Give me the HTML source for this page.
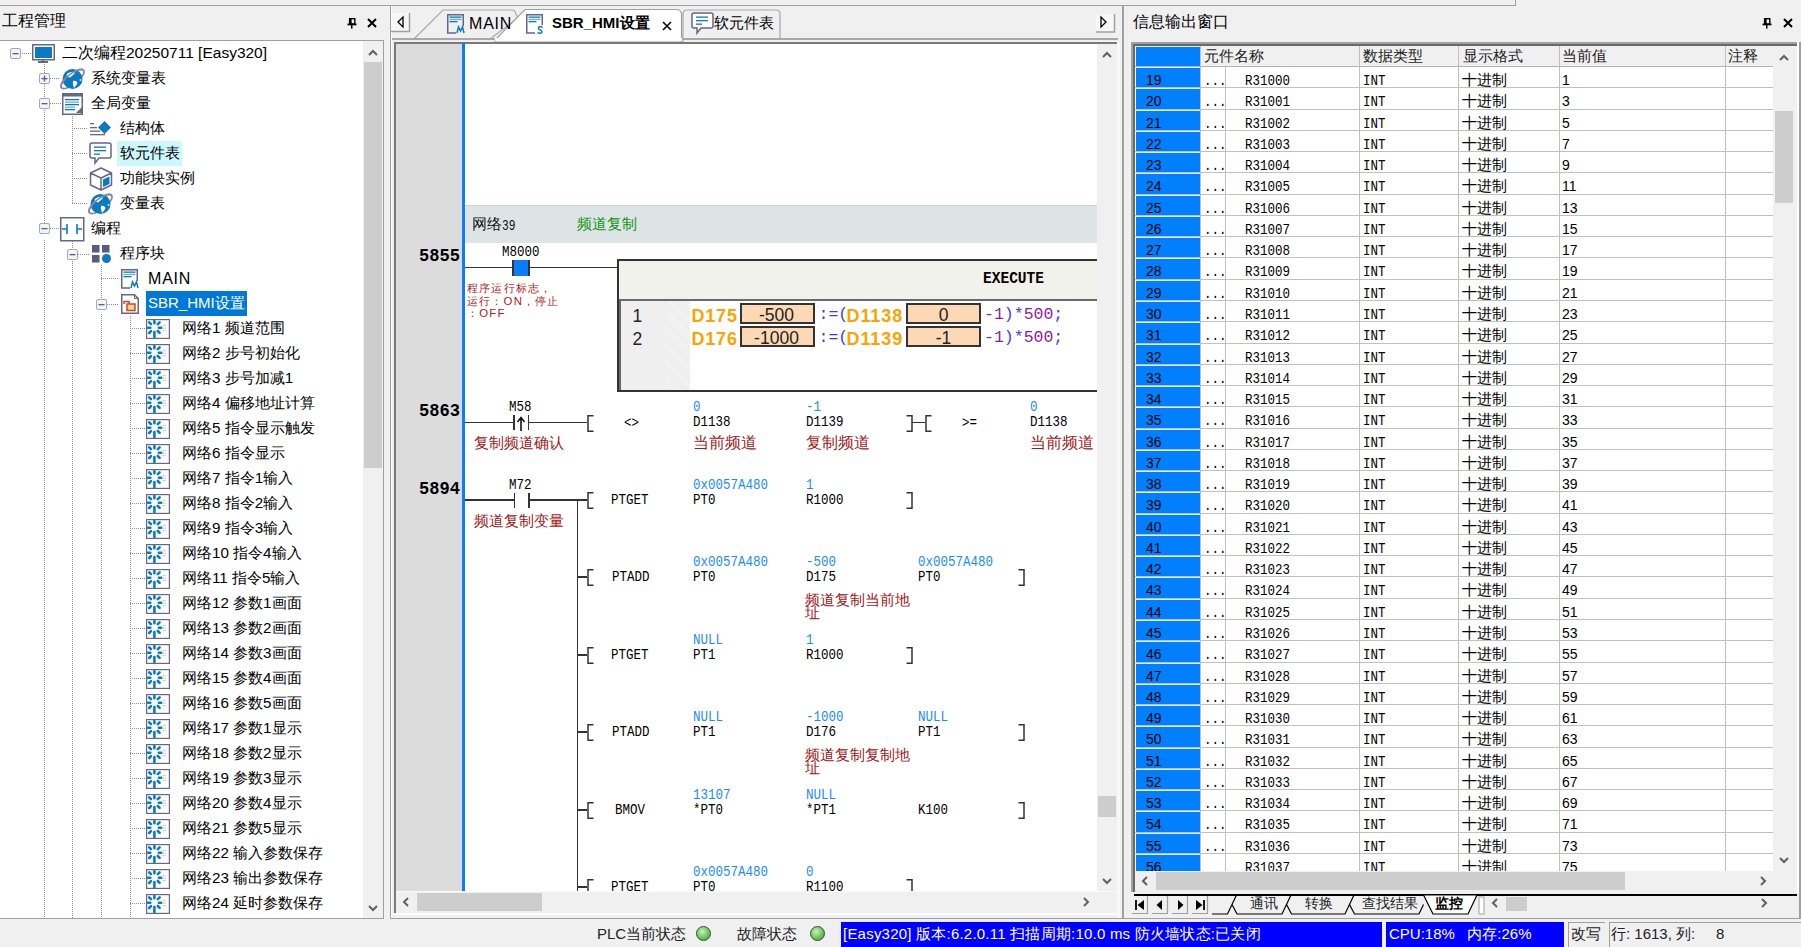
<!DOCTYPE html><html><head><meta charset="utf-8"><style>
*{margin:0;padding:0;box-sizing:border-box}
body{width:1801px;height:947px;background:#f0f0f0;position:relative;overflow:hidden;font-family:"Liberation Sans",sans-serif;color:#000}
.t{position:absolute;white-space:nowrap;line-height:1}
.ui{font-size:15px}
.mono{font-family:"Liberation Mono",monospace}
svg{position:absolute;overflow:visible}
</style></head><body>
<div style="position:absolute;left:0px;top:5px;width:1515px;height:1px;background:#a0a0a0"></div>
<div style="position:absolute;left:1515px;top:0px;width:1px;height:6px;background:#a0a0a0"></div>
<div class="t" style="left:2px;top:13px;font-size:15.5px">工程管理</div>
<svg style="left:346.5px;top:18px" width="10" height="11" viewBox="0 0 10 11"><rect x="2.6" y="0.7" width="5.2" height="5.3" fill="none" stroke="#000" stroke-width="1.4"/><rect x="2" y="0" width="2.6" height="6" fill="#000"/><rect x="0.5" y="5.6" width="9" height="1.7" fill="#000"/><rect x="4" y="7" width="1.5" height="3.6" fill="#000"/></svg>
<svg style="left:367px;top:18px" width="10" height="10" viewBox="0 0 10 10"><path d="M1 1L9 9M9 1L1 9" stroke="#000" stroke-width="2"/></svg>
<div style="position:absolute;left:0px;top:40px;width:384px;height:1px;background:#a0a0a0"></div>
<div style="position:absolute;left:0px;top:41px;width:363px;height:877px;background:#fff"></div>
<div style="position:absolute;left:363px;top:41px;width:20px;height:877px;background:#f0f0f0"></div>
<div style="position:absolute;left:383px;top:40px;width:1px;height:879px;background:#a0a0a0"></div>
<div style="position:absolute;left:0px;top:918px;width:384px;height:1px;background:#a0a0a0"></div>
<div style="position:absolute;left:364px;top:62px;width:18px;height:406px;background:#cdcdcd"></div>
<svg style="left:368px;top:49px" width="10" height="7" viewBox="0 0 10 7"><path d="M1 6L5 2L9 6" fill="none" stroke="#606060" stroke-width="2"/></svg>
<svg style="left:368px;top:905px" width="10" height="7" viewBox="0 0 10 7"><path d="M1 1L5 5L9 1" fill="none" stroke="#606060" stroke-width="2"/></svg>
<div style="position:absolute;left:44px;top:64px;width:1px;height:166px;background:repeating-linear-gradient(#909090 0 1px,transparent 1px 2px)"></div>
<div style="position:absolute;left:44px;top:240px;width:1px;height:678px;background:repeating-linear-gradient(#909090 0 1px,transparent 1px 2px)"></div>
<div style="position:absolute;left:72px;top:116px;width:1px;height:88px;background:repeating-linear-gradient(#909090 0 1px,transparent 1px 2px)"></div>
<div style="position:absolute;left:72px;top:241px;width:1px;height:677px;background:repeating-linear-gradient(#909090 0 1px,transparent 1px 2px)"></div>
<div style="position:absolute;left:101px;top:265px;width:1px;height:37px;background:repeating-linear-gradient(#909090 0 1px,transparent 1px 2px)"></div>
<div style="position:absolute;left:101px;top:314px;width:1px;height:604px;background:repeating-linear-gradient(#909090 0 1px,transparent 1px 2px)"></div>
<div style="position:absolute;left:130px;top:316px;width:1px;height:602px;background:repeating-linear-gradient(#909090 0 1px,transparent 1px 2px)"></div>
<svg style="left:10px;top:48px" width="11" height="11" viewBox="0 0 11 11"><rect x="0.5" y="0.5" width="10" height="10" rx="1.5" fill="#f4f4f4" stroke="#a8a8a8"/><rect x="2.5" y="5" width="6" height="1.3" fill="#5060a8"/></svg>
<div style="position:absolute;left:22px;top:53px;width:9px;height:1px;background:repeating-linear-gradient(90deg,#909090 0 1px,transparent 1px 2px)"></div>
<svg style="left:32px;top:44px" width="23" height="20" viewBox="0 0 23 20"><rect x="0.75" y="0.75" width="21.5" height="15" fill="#fff" stroke="#66668a" stroke-width="1.5"/><rect x="3" y="3" width="17" height="11" fill="#0a7ac2"/><rect x="6" y="17" width="10" height="2" fill="#66668a"/><rect x="10" y="15" width="2" height="2" fill="#66668a"/></svg>
<div class="t" style="left:62px;top:45px;font-size:15.5px">二次编程20250711 [Easy320]</div>
<svg style="left:39px;top:73px" width="11" height="11" viewBox="0 0 11 11"><rect x="0.5" y="0.5" width="10" height="10" rx="1.5" fill="#f4f4f4" stroke="#a8a8a8"/><rect x="2.5" y="5" width="6" height="1.3" fill="#5060a8"/><rect x="4.85" y="2.5" width="1.3" height="6" fill="#5060a8"/></svg>
<div style="position:absolute;left:50px;top:78px;width:10px;height:1px;background:repeating-linear-gradient(90deg,#909090 0 1px,transparent 1px 2px)"></div>
<svg style="left:60px;top:67px" width="26" height="24" viewBox="0 0 26 24"><g transform="rotate(-38 12.5 12)"><ellipse cx="12.5" cy="12" rx="14" ry="5.2" fill="none" stroke="#8a8a9e" stroke-width="1.8"/></g><circle cx="12.5" cy="12" r="10" fill="#0a7ac2"/><path d="M6.5 8C8 5 12 4.5 15 5.5C14.5 7.5 12 8.5 10 10.5C8.5 10.5 7 9.5 6.5 8Z M13 14C15 13.5 17 14.5 17.5 16C16.5 18 15.5 19.5 14 21C13.5 19 12.5 16.5 13 14Z" fill="#fff"/><circle cx="20.5" cy="13" r="1" fill="#cde6f5"/><g transform="rotate(-38 12.5 12)"><path d="M-1.5 12A14 5.2 0 0 1 26.5 12" fill="none" stroke="#8a8a9e" stroke-width="1.8"/></g></svg>
<div class="t" style="left:91px;top:70px;font-size:15px">系统变量表</div>
<svg style="left:39px;top:98px" width="11" height="11" viewBox="0 0 11 11"><rect x="0.5" y="0.5" width="10" height="10" rx="1.5" fill="#f4f4f4" stroke="#a8a8a8"/><rect x="2.5" y="5" width="6" height="1.3" fill="#5060a8"/></svg>
<div style="position:absolute;left:50px;top:103px;width:11px;height:1px;background:repeating-linear-gradient(90deg,#909090 0 1px,transparent 1px 2px)"></div>
<svg style="left:62px;top:93px" width="21" height="22" viewBox="0 0 21 22"><rect x="0.75" y="0.75" width="19.5" height="20.5" fill="#fff" stroke="#66668a" stroke-width="1.5"/><rect x="1" y="1" width="19" height="2.5" fill="#66668a"/><rect x="3" y="6" width="14" height="1.3" fill="#0a7ac2"/><rect x="3" y="8.5" width="14" height="1.3" fill="#69b0dd"/><rect x="3" y="11" width="14" height="1.3" fill="#0a7ac2"/><rect x="3" y="13.5" width="10" height="1.3" fill="#69b0dd"/><rect x="3" y="16" width="10" height="1.3" fill="#0a7ac2"/><path d="M14 20L20 14V20Z" fill="#66668a"/></svg>
<div class="t" style="left:91px;top:95px;font-size:15px">全局变量</div>
<div style="position:absolute;left:72px;top:128px;width:16px;height:1px;background:repeating-linear-gradient(90deg,#909090 0 1px,transparent 1px 2px)"></div>
<svg style="left:89px;top:120px" width="23" height="16" viewBox="0 0 23 16"><rect x="1" y="3" width="4" height="1.3" fill="#66668a"/><rect x="1" y="7" width="7" height="1.3" fill="#66668a"/><rect x="1" y="10.5" width="10" height="1.3" fill="#66668a"/><rect x="1" y="14" width="15" height="1.3" fill="#66668a"/><path d="M15.5 1L22 7.5L15.5 14L9 7.5Z" fill="#0a7ac2"/></svg>
<div class="t" style="left:120px;top:120px;font-size:15px">结构体</div>
<div style="position:absolute;left:72px;top:153px;width:16px;height:1px;background:repeating-linear-gradient(90deg,#909090 0 1px,transparent 1px 2px)"></div>
<div style="position:absolute;left:117px;top:141px;width:65px;height:25px;background:#cdf7fc"></div>
<svg style="left:89px;top:142px" width="23" height="23" viewBox="0 0 23 23"><path d="M3 1H20a2 2 0 0 1 2 2V14a2 2 0 0 1-2 2H10L6 21V16H3a2 2 0 0 1-2-2V3a2 2 0 0 1 2-2Z" fill="#fff" stroke="#66668a" stroke-width="1.5"/><rect x="5" y="4.5" width="12" height="1.3" fill="#0a7ac2"/><rect x="5" y="8" width="12" height="1.3" fill="#0a7ac2"/><rect x="5" y="11.5" width="6" height="1.3" fill="#0a7ac2"/></svg>
<div class="t" style="left:120px;top:145px;font-size:15px">软元件表</div>
<div style="position:absolute;left:72px;top:178px;width:16px;height:1px;background:repeating-linear-gradient(90deg,#909090 0 1px,transparent 1px 2px)"></div>
<svg style="left:89px;top:167px" width="24" height="24" viewBox="0 0 24 24"><path d="M12 1L22.5 6V18L12 23L1.5 18V6Z M1.5 6L12 11L22.5 6 M12 11V23" fill="#fff" stroke="#66668a" stroke-width="1.5" stroke-linejoin="round"/><path d="M14 12.5L20.5 9.5V17L14 20Z" fill="#0a7ac2"/></svg>
<div class="t" style="left:120px;top:170px;font-size:15px">功能块实例</div>
<div style="position:absolute;left:72px;top:203px;width:16px;height:1px;background:repeating-linear-gradient(90deg,#909090 0 1px,transparent 1px 2px)"></div>
<svg style="left:88px;top:192px" width="26" height="24" viewBox="0 0 26 24"><g transform="rotate(-38 12.5 12)"><ellipse cx="12.5" cy="12" rx="14" ry="5.2" fill="none" stroke="#8a8a9e" stroke-width="1.8"/></g><circle cx="12.5" cy="12" r="10" fill="#0a7ac2"/><path d="M6.5 8C8 5 12 4.5 15 5.5C14.5 7.5 12 8.5 10 10.5C8.5 10.5 7 9.5 6.5 8Z M13 14C15 13.5 17 14.5 17.5 16C16.5 18 15.5 19.5 14 21C13.5 19 12.5 16.5 13 14Z" fill="#fff"/><circle cx="20.5" cy="13" r="1" fill="#cde6f5"/><g transform="rotate(-38 12.5 12)"><path d="M-1.5 12A14 5.2 0 0 1 26.5 12" fill="none" stroke="#8a8a9e" stroke-width="1.8"/></g></svg>
<div class="t" style="left:120px;top:195px;font-size:15px">变量表</div>
<svg style="left:39px;top:223px" width="11" height="11" viewBox="0 0 11 11"><rect x="0.5" y="0.5" width="10" height="10" rx="1.5" fill="#f4f4f4" stroke="#a8a8a8"/><rect x="2.5" y="5" width="6" height="1.3" fill="#5060a8"/></svg>
<div style="position:absolute;left:50px;top:228px;width:9px;height:1px;background:repeating-linear-gradient(90deg,#909090 0 1px,transparent 1px 2px)"></div>
<svg style="left:60px;top:217px" width="25" height="24" viewBox="0 0 25 24"><rect x="0.75" y="0.75" width="23" height="23" fill="#fff" stroke="#66668a" stroke-width="1.5"/><path d="M2 12H7M7 7V17M17 7V17M17 12H22" stroke="#0a7ac2" stroke-width="1.6" fill="none"/></svg>
<div class="t" style="left:91px;top:220px;font-size:15px">编程</div>
<svg style="left:67px;top:249px" width="11" height="11" viewBox="0 0 11 11"><rect x="0.5" y="0.5" width="10" height="10" rx="1.5" fill="#f4f4f4" stroke="#a8a8a8"/><rect x="2.5" y="5" width="6" height="1.3" fill="#5060a8"/></svg>
<div style="position:absolute;left:78px;top:254px;width:12px;height:1px;background:repeating-linear-gradient(90deg,#909090 0 1px,transparent 1px 2px)"></div>
<svg style="left:92px;top:245px" width="19" height="18" viewBox="0 0 19 18"><rect x="0" y="0" width="7.5" height="7.5" fill="#5b5b7e"/><rect x="10" y="0" width="7.5" height="7.5" fill="#5b5b7e"/><rect x="0" y="10" width="7.5" height="7.5" fill="#5b5b7e"/><circle cx="14.5" cy="13.5" r="4.5" fill="#0a7ac2"/></svg>
<div class="t" style="left:120px;top:245px;font-size:15px">程序块</div>
<div style="position:absolute;left:101px;top:278px;width:18px;height:1px;background:repeating-linear-gradient(90deg,#909090 0 1px,transparent 1px 2px)"></div>
<svg style="left:121px;top:269px" width="18" height="20" viewBox="0 0 18 20"><path d="M9 19H0.75V0.75H16.25V12" fill="none" stroke="#66668a" stroke-width="1.5"/><rect x="2.5" y="2.5" width="12" height="1.3" fill="#0a7ac2"/><rect x="2.5" y="4.8" width="12" height="1.3" fill="#69b0dd"/><rect x="2.5" y="7" width="8" height="1.3" fill="#0a7ac2"/><path d="M10 19L11.5 13L13.5 17L15.5 13L17 19" fill="none" stroke="#0a7ac2" stroke-width="1.5"/></svg>
<div class="t" style="left:148px;top:271px;font-size:16px;letter-spacing:0.8px">MAIN</div>
<svg style="left:96px;top:299px" width="11" height="11" viewBox="0 0 11 11"><rect x="0.5" y="0.5" width="10" height="10" rx="1.5" fill="#f4f4f4" stroke="#a8a8a8"/><rect x="2.5" y="5" width="6" height="1.3" fill="#5060a8"/></svg>
<div style="position:absolute;left:107px;top:304px;width:12px;height:1px;background:repeating-linear-gradient(90deg,#909090 0 1px,transparent 1px 2px)"></div>
<svg style="left:121px;top:294px" width="18" height="20" viewBox="0 0 18 20"><path d="M0.75 0.75H13.5L17.25 4.5V19.25H0.75Z" fill="#fff" stroke="#66668a" stroke-width="1.5"/><path d="M13.5 1V4.5H17" fill="none" stroke="#66668a" stroke-width="1"/><rect x="6" y="10" width="8" height="6.5" fill="#e8e080" stroke="#e03c3c" stroke-width="1.5"/><path d="M3 10V7.5H8V10" fill="none" stroke="#e03c3c" stroke-width="1.5"/></svg>
<div style="position:absolute;left:146px;top:291px;width:101px;height:25px;background:#0078d7"></div>
<div class="t" style="left:148px;top:295px;font-size:15px;color:#fff">SBR_HMI设置</div>
<div style="position:absolute;left:130px;top:328px;width:15px;height:1px;background:repeating-linear-gradient(90deg,#909090 0 1px,transparent 1px 2px)"></div>
<svg style="left:146px;top:318.5px" width="24" height="20" viewBox="0 0 24 20"><rect x="0.6" y="0.6" width="22.8" height="18.8" fill="#fff" stroke="#66668a" stroke-width="1.2"/><g stroke="#0a7ac2" stroke-width="2.6" stroke-linecap="round"><path d="M8.4 2V4.2M8.4 13V18.2M2 8.7H4.3M12.9 8.7H15.2M3.2 3.3L5 5.1M11.8 12L13.6 13.8M3.2 14L5 12.2M11.8 5.2L13.6 3.4"/></g><g fill="#a0a0a0"><rect x="16.8" y="6.2" width="1" height="1"/><rect x="18.6" y="6.2" width="1" height="1"/><rect x="16.8" y="8.7" width="1" height="1"/><rect x="18.6" y="8.7" width="1" height="1"/><rect x="16.8" y="11.2" width="1" height="1"/><rect x="18.6" y="11.2" width="1" height="1"/></g></svg>
<div class="t" style="left:182px;top:320px;font-size:15.2px">网络1 频道范围</div>
<div style="position:absolute;left:130px;top:353px;width:15px;height:1px;background:repeating-linear-gradient(90deg,#909090 0 1px,transparent 1px 2px)"></div>
<svg style="left:146px;top:343.5px" width="24" height="20" viewBox="0 0 24 20"><rect x="0.6" y="0.6" width="22.8" height="18.8" fill="#fff" stroke="#66668a" stroke-width="1.2"/><g stroke="#0a7ac2" stroke-width="2.6" stroke-linecap="round"><path d="M8.4 2V4.2M8.4 13V18.2M2 8.7H4.3M12.9 8.7H15.2M3.2 3.3L5 5.1M11.8 12L13.6 13.8M3.2 14L5 12.2M11.8 5.2L13.6 3.4"/></g><g fill="#a0a0a0"><rect x="16.8" y="6.2" width="1" height="1"/><rect x="18.6" y="6.2" width="1" height="1"/><rect x="16.8" y="8.7" width="1" height="1"/><rect x="18.6" y="8.7" width="1" height="1"/><rect x="16.8" y="11.2" width="1" height="1"/><rect x="18.6" y="11.2" width="1" height="1"/></g></svg>
<div class="t" style="left:182px;top:345px;font-size:15.2px">网络2 步号初始化</div>
<div style="position:absolute;left:130px;top:378px;width:15px;height:1px;background:repeating-linear-gradient(90deg,#909090 0 1px,transparent 1px 2px)"></div>
<svg style="left:146px;top:368.5px" width="24" height="20" viewBox="0 0 24 20"><rect x="0.6" y="0.6" width="22.8" height="18.8" fill="#fff" stroke="#66668a" stroke-width="1.2"/><g stroke="#0a7ac2" stroke-width="2.6" stroke-linecap="round"><path d="M8.4 2V4.2M8.4 13V18.2M2 8.7H4.3M12.9 8.7H15.2M3.2 3.3L5 5.1M11.8 12L13.6 13.8M3.2 14L5 12.2M11.8 5.2L13.6 3.4"/></g><g fill="#a0a0a0"><rect x="16.8" y="6.2" width="1" height="1"/><rect x="18.6" y="6.2" width="1" height="1"/><rect x="16.8" y="8.7" width="1" height="1"/><rect x="18.6" y="8.7" width="1" height="1"/><rect x="16.8" y="11.2" width="1" height="1"/><rect x="18.6" y="11.2" width="1" height="1"/></g></svg>
<div class="t" style="left:182px;top:370px;font-size:15.2px">网络3 步号加减1</div>
<div style="position:absolute;left:130px;top:403px;width:15px;height:1px;background:repeating-linear-gradient(90deg,#909090 0 1px,transparent 1px 2px)"></div>
<svg style="left:146px;top:393.5px" width="24" height="20" viewBox="0 0 24 20"><rect x="0.6" y="0.6" width="22.8" height="18.8" fill="#fff" stroke="#66668a" stroke-width="1.2"/><g stroke="#0a7ac2" stroke-width="2.6" stroke-linecap="round"><path d="M8.4 2V4.2M8.4 13V18.2M2 8.7H4.3M12.9 8.7H15.2M3.2 3.3L5 5.1M11.8 12L13.6 13.8M3.2 14L5 12.2M11.8 5.2L13.6 3.4"/></g><g fill="#a0a0a0"><rect x="16.8" y="6.2" width="1" height="1"/><rect x="18.6" y="6.2" width="1" height="1"/><rect x="16.8" y="8.7" width="1" height="1"/><rect x="18.6" y="8.7" width="1" height="1"/><rect x="16.8" y="11.2" width="1" height="1"/><rect x="18.6" y="11.2" width="1" height="1"/></g></svg>
<div class="t" style="left:182px;top:395px;font-size:15.2px">网络4 偏移地址计算</div>
<div style="position:absolute;left:130px;top:428px;width:15px;height:1px;background:repeating-linear-gradient(90deg,#909090 0 1px,transparent 1px 2px)"></div>
<svg style="left:146px;top:418.5px" width="24" height="20" viewBox="0 0 24 20"><rect x="0.6" y="0.6" width="22.8" height="18.8" fill="#fff" stroke="#66668a" stroke-width="1.2"/><g stroke="#0a7ac2" stroke-width="2.6" stroke-linecap="round"><path d="M8.4 2V4.2M8.4 13V18.2M2 8.7H4.3M12.9 8.7H15.2M3.2 3.3L5 5.1M11.8 12L13.6 13.8M3.2 14L5 12.2M11.8 5.2L13.6 3.4"/></g><g fill="#a0a0a0"><rect x="16.8" y="6.2" width="1" height="1"/><rect x="18.6" y="6.2" width="1" height="1"/><rect x="16.8" y="8.7" width="1" height="1"/><rect x="18.6" y="8.7" width="1" height="1"/><rect x="16.8" y="11.2" width="1" height="1"/><rect x="18.6" y="11.2" width="1" height="1"/></g></svg>
<div class="t" style="left:182px;top:420px;font-size:15.2px">网络5 指令显示触发</div>
<div style="position:absolute;left:130px;top:453px;width:15px;height:1px;background:repeating-linear-gradient(90deg,#909090 0 1px,transparent 1px 2px)"></div>
<svg style="left:146px;top:443.5px" width="24" height="20" viewBox="0 0 24 20"><rect x="0.6" y="0.6" width="22.8" height="18.8" fill="#fff" stroke="#66668a" stroke-width="1.2"/><g stroke="#0a7ac2" stroke-width="2.6" stroke-linecap="round"><path d="M8.4 2V4.2M8.4 13V18.2M2 8.7H4.3M12.9 8.7H15.2M3.2 3.3L5 5.1M11.8 12L13.6 13.8M3.2 14L5 12.2M11.8 5.2L13.6 3.4"/></g><g fill="#a0a0a0"><rect x="16.8" y="6.2" width="1" height="1"/><rect x="18.6" y="6.2" width="1" height="1"/><rect x="16.8" y="8.7" width="1" height="1"/><rect x="18.6" y="8.7" width="1" height="1"/><rect x="16.8" y="11.2" width="1" height="1"/><rect x="18.6" y="11.2" width="1" height="1"/></g></svg>
<div class="t" style="left:182px;top:445px;font-size:15.2px">网络6 指令显示</div>
<div style="position:absolute;left:130px;top:478px;width:15px;height:1px;background:repeating-linear-gradient(90deg,#909090 0 1px,transparent 1px 2px)"></div>
<svg style="left:146px;top:468.5px" width="24" height="20" viewBox="0 0 24 20"><rect x="0.6" y="0.6" width="22.8" height="18.8" fill="#fff" stroke="#66668a" stroke-width="1.2"/><g stroke="#0a7ac2" stroke-width="2.6" stroke-linecap="round"><path d="M8.4 2V4.2M8.4 13V18.2M2 8.7H4.3M12.9 8.7H15.2M3.2 3.3L5 5.1M11.8 12L13.6 13.8M3.2 14L5 12.2M11.8 5.2L13.6 3.4"/></g><g fill="#a0a0a0"><rect x="16.8" y="6.2" width="1" height="1"/><rect x="18.6" y="6.2" width="1" height="1"/><rect x="16.8" y="8.7" width="1" height="1"/><rect x="18.6" y="8.7" width="1" height="1"/><rect x="16.8" y="11.2" width="1" height="1"/><rect x="18.6" y="11.2" width="1" height="1"/></g></svg>
<div class="t" style="left:182px;top:470px;font-size:15.2px">网络7 指令1输入</div>
<div style="position:absolute;left:130px;top:503px;width:15px;height:1px;background:repeating-linear-gradient(90deg,#909090 0 1px,transparent 1px 2px)"></div>
<svg style="left:146px;top:493.5px" width="24" height="20" viewBox="0 0 24 20"><rect x="0.6" y="0.6" width="22.8" height="18.8" fill="#fff" stroke="#66668a" stroke-width="1.2"/><g stroke="#0a7ac2" stroke-width="2.6" stroke-linecap="round"><path d="M8.4 2V4.2M8.4 13V18.2M2 8.7H4.3M12.9 8.7H15.2M3.2 3.3L5 5.1M11.8 12L13.6 13.8M3.2 14L5 12.2M11.8 5.2L13.6 3.4"/></g><g fill="#a0a0a0"><rect x="16.8" y="6.2" width="1" height="1"/><rect x="18.6" y="6.2" width="1" height="1"/><rect x="16.8" y="8.7" width="1" height="1"/><rect x="18.6" y="8.7" width="1" height="1"/><rect x="16.8" y="11.2" width="1" height="1"/><rect x="18.6" y="11.2" width="1" height="1"/></g></svg>
<div class="t" style="left:182px;top:495px;font-size:15.2px">网络8 指令2输入</div>
<div style="position:absolute;left:130px;top:528px;width:15px;height:1px;background:repeating-linear-gradient(90deg,#909090 0 1px,transparent 1px 2px)"></div>
<svg style="left:146px;top:518.5px" width="24" height="20" viewBox="0 0 24 20"><rect x="0.6" y="0.6" width="22.8" height="18.8" fill="#fff" stroke="#66668a" stroke-width="1.2"/><g stroke="#0a7ac2" stroke-width="2.6" stroke-linecap="round"><path d="M8.4 2V4.2M8.4 13V18.2M2 8.7H4.3M12.9 8.7H15.2M3.2 3.3L5 5.1M11.8 12L13.6 13.8M3.2 14L5 12.2M11.8 5.2L13.6 3.4"/></g><g fill="#a0a0a0"><rect x="16.8" y="6.2" width="1" height="1"/><rect x="18.6" y="6.2" width="1" height="1"/><rect x="16.8" y="8.7" width="1" height="1"/><rect x="18.6" y="8.7" width="1" height="1"/><rect x="16.8" y="11.2" width="1" height="1"/><rect x="18.6" y="11.2" width="1" height="1"/></g></svg>
<div class="t" style="left:182px;top:520px;font-size:15.2px">网络9 指令3输入</div>
<div style="position:absolute;left:130px;top:553px;width:15px;height:1px;background:repeating-linear-gradient(90deg,#909090 0 1px,transparent 1px 2px)"></div>
<svg style="left:146px;top:543.5px" width="24" height="20" viewBox="0 0 24 20"><rect x="0.6" y="0.6" width="22.8" height="18.8" fill="#fff" stroke="#66668a" stroke-width="1.2"/><g stroke="#0a7ac2" stroke-width="2.6" stroke-linecap="round"><path d="M8.4 2V4.2M8.4 13V18.2M2 8.7H4.3M12.9 8.7H15.2M3.2 3.3L5 5.1M11.8 12L13.6 13.8M3.2 14L5 12.2M11.8 5.2L13.6 3.4"/></g><g fill="#a0a0a0"><rect x="16.8" y="6.2" width="1" height="1"/><rect x="18.6" y="6.2" width="1" height="1"/><rect x="16.8" y="8.7" width="1" height="1"/><rect x="18.6" y="8.7" width="1" height="1"/><rect x="16.8" y="11.2" width="1" height="1"/><rect x="18.6" y="11.2" width="1" height="1"/></g></svg>
<div class="t" style="left:182px;top:545px;font-size:15.2px">网络10 指令4输入</div>
<div style="position:absolute;left:130px;top:578px;width:15px;height:1px;background:repeating-linear-gradient(90deg,#909090 0 1px,transparent 1px 2px)"></div>
<svg style="left:146px;top:568.5px" width="24" height="20" viewBox="0 0 24 20"><rect x="0.6" y="0.6" width="22.8" height="18.8" fill="#fff" stroke="#66668a" stroke-width="1.2"/><g stroke="#0a7ac2" stroke-width="2.6" stroke-linecap="round"><path d="M8.4 2V4.2M8.4 13V18.2M2 8.7H4.3M12.9 8.7H15.2M3.2 3.3L5 5.1M11.8 12L13.6 13.8M3.2 14L5 12.2M11.8 5.2L13.6 3.4"/></g><g fill="#a0a0a0"><rect x="16.8" y="6.2" width="1" height="1"/><rect x="18.6" y="6.2" width="1" height="1"/><rect x="16.8" y="8.7" width="1" height="1"/><rect x="18.6" y="8.7" width="1" height="1"/><rect x="16.8" y="11.2" width="1" height="1"/><rect x="18.6" y="11.2" width="1" height="1"/></g></svg>
<div class="t" style="left:182px;top:570px;font-size:15.2px">网络11 指令5输入</div>
<div style="position:absolute;left:130px;top:603px;width:15px;height:1px;background:repeating-linear-gradient(90deg,#909090 0 1px,transparent 1px 2px)"></div>
<svg style="left:146px;top:593.5px" width="24" height="20" viewBox="0 0 24 20"><rect x="0.6" y="0.6" width="22.8" height="18.8" fill="#fff" stroke="#66668a" stroke-width="1.2"/><g stroke="#0a7ac2" stroke-width="2.6" stroke-linecap="round"><path d="M8.4 2V4.2M8.4 13V18.2M2 8.7H4.3M12.9 8.7H15.2M3.2 3.3L5 5.1M11.8 12L13.6 13.8M3.2 14L5 12.2M11.8 5.2L13.6 3.4"/></g><g fill="#a0a0a0"><rect x="16.8" y="6.2" width="1" height="1"/><rect x="18.6" y="6.2" width="1" height="1"/><rect x="16.8" y="8.7" width="1" height="1"/><rect x="18.6" y="8.7" width="1" height="1"/><rect x="16.8" y="11.2" width="1" height="1"/><rect x="18.6" y="11.2" width="1" height="1"/></g></svg>
<div class="t" style="left:182px;top:595px;font-size:15.2px">网络12 参数1画面</div>
<div style="position:absolute;left:130px;top:628px;width:15px;height:1px;background:repeating-linear-gradient(90deg,#909090 0 1px,transparent 1px 2px)"></div>
<svg style="left:146px;top:618.5px" width="24" height="20" viewBox="0 0 24 20"><rect x="0.6" y="0.6" width="22.8" height="18.8" fill="#fff" stroke="#66668a" stroke-width="1.2"/><g stroke="#0a7ac2" stroke-width="2.6" stroke-linecap="round"><path d="M8.4 2V4.2M8.4 13V18.2M2 8.7H4.3M12.9 8.7H15.2M3.2 3.3L5 5.1M11.8 12L13.6 13.8M3.2 14L5 12.2M11.8 5.2L13.6 3.4"/></g><g fill="#a0a0a0"><rect x="16.8" y="6.2" width="1" height="1"/><rect x="18.6" y="6.2" width="1" height="1"/><rect x="16.8" y="8.7" width="1" height="1"/><rect x="18.6" y="8.7" width="1" height="1"/><rect x="16.8" y="11.2" width="1" height="1"/><rect x="18.6" y="11.2" width="1" height="1"/></g></svg>
<div class="t" style="left:182px;top:620px;font-size:15.2px">网络13 参数2画面</div>
<div style="position:absolute;left:130px;top:653px;width:15px;height:1px;background:repeating-linear-gradient(90deg,#909090 0 1px,transparent 1px 2px)"></div>
<svg style="left:146px;top:643.5px" width="24" height="20" viewBox="0 0 24 20"><rect x="0.6" y="0.6" width="22.8" height="18.8" fill="#fff" stroke="#66668a" stroke-width="1.2"/><g stroke="#0a7ac2" stroke-width="2.6" stroke-linecap="round"><path d="M8.4 2V4.2M8.4 13V18.2M2 8.7H4.3M12.9 8.7H15.2M3.2 3.3L5 5.1M11.8 12L13.6 13.8M3.2 14L5 12.2M11.8 5.2L13.6 3.4"/></g><g fill="#a0a0a0"><rect x="16.8" y="6.2" width="1" height="1"/><rect x="18.6" y="6.2" width="1" height="1"/><rect x="16.8" y="8.7" width="1" height="1"/><rect x="18.6" y="8.7" width="1" height="1"/><rect x="16.8" y="11.2" width="1" height="1"/><rect x="18.6" y="11.2" width="1" height="1"/></g></svg>
<div class="t" style="left:182px;top:645px;font-size:15.2px">网络14 参数3画面</div>
<div style="position:absolute;left:130px;top:678px;width:15px;height:1px;background:repeating-linear-gradient(90deg,#909090 0 1px,transparent 1px 2px)"></div>
<svg style="left:146px;top:668.5px" width="24" height="20" viewBox="0 0 24 20"><rect x="0.6" y="0.6" width="22.8" height="18.8" fill="#fff" stroke="#66668a" stroke-width="1.2"/><g stroke="#0a7ac2" stroke-width="2.6" stroke-linecap="round"><path d="M8.4 2V4.2M8.4 13V18.2M2 8.7H4.3M12.9 8.7H15.2M3.2 3.3L5 5.1M11.8 12L13.6 13.8M3.2 14L5 12.2M11.8 5.2L13.6 3.4"/></g><g fill="#a0a0a0"><rect x="16.8" y="6.2" width="1" height="1"/><rect x="18.6" y="6.2" width="1" height="1"/><rect x="16.8" y="8.7" width="1" height="1"/><rect x="18.6" y="8.7" width="1" height="1"/><rect x="16.8" y="11.2" width="1" height="1"/><rect x="18.6" y="11.2" width="1" height="1"/></g></svg>
<div class="t" style="left:182px;top:670px;font-size:15.2px">网络15 参数4画面</div>
<div style="position:absolute;left:130px;top:703px;width:15px;height:1px;background:repeating-linear-gradient(90deg,#909090 0 1px,transparent 1px 2px)"></div>
<svg style="left:146px;top:693.5px" width="24" height="20" viewBox="0 0 24 20"><rect x="0.6" y="0.6" width="22.8" height="18.8" fill="#fff" stroke="#66668a" stroke-width="1.2"/><g stroke="#0a7ac2" stroke-width="2.6" stroke-linecap="round"><path d="M8.4 2V4.2M8.4 13V18.2M2 8.7H4.3M12.9 8.7H15.2M3.2 3.3L5 5.1M11.8 12L13.6 13.8M3.2 14L5 12.2M11.8 5.2L13.6 3.4"/></g><g fill="#a0a0a0"><rect x="16.8" y="6.2" width="1" height="1"/><rect x="18.6" y="6.2" width="1" height="1"/><rect x="16.8" y="8.7" width="1" height="1"/><rect x="18.6" y="8.7" width="1" height="1"/><rect x="16.8" y="11.2" width="1" height="1"/><rect x="18.6" y="11.2" width="1" height="1"/></g></svg>
<div class="t" style="left:182px;top:695px;font-size:15.2px">网络16 参数5画面</div>
<div style="position:absolute;left:130px;top:728px;width:15px;height:1px;background:repeating-linear-gradient(90deg,#909090 0 1px,transparent 1px 2px)"></div>
<svg style="left:146px;top:718.5px" width="24" height="20" viewBox="0 0 24 20"><rect x="0.6" y="0.6" width="22.8" height="18.8" fill="#fff" stroke="#66668a" stroke-width="1.2"/><g stroke="#0a7ac2" stroke-width="2.6" stroke-linecap="round"><path d="M8.4 2V4.2M8.4 13V18.2M2 8.7H4.3M12.9 8.7H15.2M3.2 3.3L5 5.1M11.8 12L13.6 13.8M3.2 14L5 12.2M11.8 5.2L13.6 3.4"/></g><g fill="#a0a0a0"><rect x="16.8" y="6.2" width="1" height="1"/><rect x="18.6" y="6.2" width="1" height="1"/><rect x="16.8" y="8.7" width="1" height="1"/><rect x="18.6" y="8.7" width="1" height="1"/><rect x="16.8" y="11.2" width="1" height="1"/><rect x="18.6" y="11.2" width="1" height="1"/></g></svg>
<div class="t" style="left:182px;top:720px;font-size:15.2px">网络17 参数1显示</div>
<div style="position:absolute;left:130px;top:753px;width:15px;height:1px;background:repeating-linear-gradient(90deg,#909090 0 1px,transparent 1px 2px)"></div>
<svg style="left:146px;top:743.5px" width="24" height="20" viewBox="0 0 24 20"><rect x="0.6" y="0.6" width="22.8" height="18.8" fill="#fff" stroke="#66668a" stroke-width="1.2"/><g stroke="#0a7ac2" stroke-width="2.6" stroke-linecap="round"><path d="M8.4 2V4.2M8.4 13V18.2M2 8.7H4.3M12.9 8.7H15.2M3.2 3.3L5 5.1M11.8 12L13.6 13.8M3.2 14L5 12.2M11.8 5.2L13.6 3.4"/></g><g fill="#a0a0a0"><rect x="16.8" y="6.2" width="1" height="1"/><rect x="18.6" y="6.2" width="1" height="1"/><rect x="16.8" y="8.7" width="1" height="1"/><rect x="18.6" y="8.7" width="1" height="1"/><rect x="16.8" y="11.2" width="1" height="1"/><rect x="18.6" y="11.2" width="1" height="1"/></g></svg>
<div class="t" style="left:182px;top:745px;font-size:15.2px">网络18 参数2显示</div>
<div style="position:absolute;left:130px;top:778px;width:15px;height:1px;background:repeating-linear-gradient(90deg,#909090 0 1px,transparent 1px 2px)"></div>
<svg style="left:146px;top:768.5px" width="24" height="20" viewBox="0 0 24 20"><rect x="0.6" y="0.6" width="22.8" height="18.8" fill="#fff" stroke="#66668a" stroke-width="1.2"/><g stroke="#0a7ac2" stroke-width="2.6" stroke-linecap="round"><path d="M8.4 2V4.2M8.4 13V18.2M2 8.7H4.3M12.9 8.7H15.2M3.2 3.3L5 5.1M11.8 12L13.6 13.8M3.2 14L5 12.2M11.8 5.2L13.6 3.4"/></g><g fill="#a0a0a0"><rect x="16.8" y="6.2" width="1" height="1"/><rect x="18.6" y="6.2" width="1" height="1"/><rect x="16.8" y="8.7" width="1" height="1"/><rect x="18.6" y="8.7" width="1" height="1"/><rect x="16.8" y="11.2" width="1" height="1"/><rect x="18.6" y="11.2" width="1" height="1"/></g></svg>
<div class="t" style="left:182px;top:770px;font-size:15.2px">网络19 参数3显示</div>
<div style="position:absolute;left:130px;top:803px;width:15px;height:1px;background:repeating-linear-gradient(90deg,#909090 0 1px,transparent 1px 2px)"></div>
<svg style="left:146px;top:793.5px" width="24" height="20" viewBox="0 0 24 20"><rect x="0.6" y="0.6" width="22.8" height="18.8" fill="#fff" stroke="#66668a" stroke-width="1.2"/><g stroke="#0a7ac2" stroke-width="2.6" stroke-linecap="round"><path d="M8.4 2V4.2M8.4 13V18.2M2 8.7H4.3M12.9 8.7H15.2M3.2 3.3L5 5.1M11.8 12L13.6 13.8M3.2 14L5 12.2M11.8 5.2L13.6 3.4"/></g><g fill="#a0a0a0"><rect x="16.8" y="6.2" width="1" height="1"/><rect x="18.6" y="6.2" width="1" height="1"/><rect x="16.8" y="8.7" width="1" height="1"/><rect x="18.6" y="8.7" width="1" height="1"/><rect x="16.8" y="11.2" width="1" height="1"/><rect x="18.6" y="11.2" width="1" height="1"/></g></svg>
<div class="t" style="left:182px;top:795px;font-size:15.2px">网络20 参数4显示</div>
<div style="position:absolute;left:130px;top:828px;width:15px;height:1px;background:repeating-linear-gradient(90deg,#909090 0 1px,transparent 1px 2px)"></div>
<svg style="left:146px;top:818.5px" width="24" height="20" viewBox="0 0 24 20"><rect x="0.6" y="0.6" width="22.8" height="18.8" fill="#fff" stroke="#66668a" stroke-width="1.2"/><g stroke="#0a7ac2" stroke-width="2.6" stroke-linecap="round"><path d="M8.4 2V4.2M8.4 13V18.2M2 8.7H4.3M12.9 8.7H15.2M3.2 3.3L5 5.1M11.8 12L13.6 13.8M3.2 14L5 12.2M11.8 5.2L13.6 3.4"/></g><g fill="#a0a0a0"><rect x="16.8" y="6.2" width="1" height="1"/><rect x="18.6" y="6.2" width="1" height="1"/><rect x="16.8" y="8.7" width="1" height="1"/><rect x="18.6" y="8.7" width="1" height="1"/><rect x="16.8" y="11.2" width="1" height="1"/><rect x="18.6" y="11.2" width="1" height="1"/></g></svg>
<div class="t" style="left:182px;top:820px;font-size:15.2px">网络21 参数5显示</div>
<div style="position:absolute;left:130px;top:853px;width:15px;height:1px;background:repeating-linear-gradient(90deg,#909090 0 1px,transparent 1px 2px)"></div>
<svg style="left:146px;top:843.5px" width="24" height="20" viewBox="0 0 24 20"><rect x="0.6" y="0.6" width="22.8" height="18.8" fill="#fff" stroke="#66668a" stroke-width="1.2"/><g stroke="#0a7ac2" stroke-width="2.6" stroke-linecap="round"><path d="M8.4 2V4.2M8.4 13V18.2M2 8.7H4.3M12.9 8.7H15.2M3.2 3.3L5 5.1M11.8 12L13.6 13.8M3.2 14L5 12.2M11.8 5.2L13.6 3.4"/></g><g fill="#a0a0a0"><rect x="16.8" y="6.2" width="1" height="1"/><rect x="18.6" y="6.2" width="1" height="1"/><rect x="16.8" y="8.7" width="1" height="1"/><rect x="18.6" y="8.7" width="1" height="1"/><rect x="16.8" y="11.2" width="1" height="1"/><rect x="18.6" y="11.2" width="1" height="1"/></g></svg>
<div class="t" style="left:182px;top:845px;font-size:15.2px">网络22 输入参数保存</div>
<div style="position:absolute;left:130px;top:878px;width:15px;height:1px;background:repeating-linear-gradient(90deg,#909090 0 1px,transparent 1px 2px)"></div>
<svg style="left:146px;top:868.5px" width="24" height="20" viewBox="0 0 24 20"><rect x="0.6" y="0.6" width="22.8" height="18.8" fill="#fff" stroke="#66668a" stroke-width="1.2"/><g stroke="#0a7ac2" stroke-width="2.6" stroke-linecap="round"><path d="M8.4 2V4.2M8.4 13V18.2M2 8.7H4.3M12.9 8.7H15.2M3.2 3.3L5 5.1M11.8 12L13.6 13.8M3.2 14L5 12.2M11.8 5.2L13.6 3.4"/></g><g fill="#a0a0a0"><rect x="16.8" y="6.2" width="1" height="1"/><rect x="18.6" y="6.2" width="1" height="1"/><rect x="16.8" y="8.7" width="1" height="1"/><rect x="18.6" y="8.7" width="1" height="1"/><rect x="16.8" y="11.2" width="1" height="1"/><rect x="18.6" y="11.2" width="1" height="1"/></g></svg>
<div class="t" style="left:182px;top:870px;font-size:15.2px">网络23 输出参数保存</div>
<div style="position:absolute;left:130px;top:903px;width:15px;height:1px;background:repeating-linear-gradient(90deg,#909090 0 1px,transparent 1px 2px)"></div>
<svg style="left:146px;top:893.5px" width="24" height="20" viewBox="0 0 24 20"><rect x="0.6" y="0.6" width="22.8" height="18.8" fill="#fff" stroke="#66668a" stroke-width="1.2"/><g stroke="#0a7ac2" stroke-width="2.6" stroke-linecap="round"><path d="M8.4 2V4.2M8.4 13V18.2M2 8.7H4.3M12.9 8.7H15.2M3.2 3.3L5 5.1M11.8 12L13.6 13.8M3.2 14L5 12.2M11.8 5.2L13.6 3.4"/></g><g fill="#a0a0a0"><rect x="16.8" y="6.2" width="1" height="1"/><rect x="18.6" y="6.2" width="1" height="1"/><rect x="16.8" y="8.7" width="1" height="1"/><rect x="18.6" y="8.7" width="1" height="1"/><rect x="16.8" y="11.2" width="1" height="1"/><rect x="18.6" y="11.2" width="1" height="1"/></g></svg>
<div class="t" style="left:182px;top:895px;font-size:15.2px">网络24 延时参数保存</div>
<div style="position:absolute;left:390px;top:6px;width:1px;height:913px;background:#a0a0a0"></div>
<div style="position:absolute;left:391px;top:6px;width:1px;height:912px;background:#fafafa"></div>
<svg style="left:391px;top:6px" width="732" height="37" viewBox="0 0 732 37"><rect x="0" y="7" width="18" height="18" fill="#f7f7f7"/><path d="M0 25.5H18.5V7" fill="none" stroke="#a0a0a0" stroke-width="1.5"/><path d="M12 11V21L7 16Z" fill="none" stroke="#000" stroke-width="1.3"/><path d="M23 33L52 4H121Q124 4 125 8L127 12L99 33Z" fill="#f0f0f0" stroke="#a8a8a8" stroke-width="1.2"/><path d="M104 34L134 3.5H286Q289 3.5 290.5 7V36H104Z" fill="#fff" stroke="#a0a0a0" stroke-width="1.2"/><path d="M292 36V8Q292 4 296 4H385Q389 4 389 8V33H292" fill="#f0f0f0" stroke="#a8a8a8" stroke-width="1.2"/><rect x="705" y="8" width="18" height="18" fill="#f7f7f7"/><path d="M705 26H723.5V8" fill="none" stroke="#a0a0a0" stroke-width="1.5"/><path d="M710 11V21L715 16Z" fill="none" stroke="#000" stroke-width="1.3"/></svg>
<div style="position:absolute;left:392px;top:38px;width:103px;height:1.5px;background:#a8a8a8"></div>
<div style="position:absolute;left:682px;top:38px;width:436px;height:1.5px;background:#a8a8a8"></div>
<div style="position:absolute;left:495px;top:38px;width:187px;height:3px;background:#fff"></div>
<svg style="left:447px;top:14px" width="18" height="20" viewBox="0 0 18 20"><path d="M9 19H0.75V0.75H16.25V12" fill="none" stroke="#66668a" stroke-width="1.5"/><rect x="2.5" y="2.5" width="12" height="1.3" fill="#0a7ac2"/><rect x="2.5" y="4.8" width="12" height="1.3" fill="#69b0dd"/><rect x="2.5" y="7" width="8" height="1.3" fill="#0a7ac2"/><path d="M10 19L11.5 13L13.5 17L15.5 13L17 19" fill="none" stroke="#0a7ac2" stroke-width="1.5"/></svg>
<div class="t" style="left:469px;top:16px;font-size:16px;letter-spacing:0.8px">MAIN</div>
<svg style="left:526px;top:14px" width="18" height="20" viewBox="0 0 18 20"><path d="M9 19H0.75V0.75H16.25V11" fill="none" stroke="#66668a" stroke-width="1.5"/><rect x="2.5" y="2.5" width="12" height="1.3" fill="#0a7ac2"/><rect x="2.5" y="4.8" width="12" height="1.3" fill="#69b0dd"/><rect x="2.5" y="7" width="8" height="1.3" fill="#0a7ac2"/><path d="M16.5 13.5C15 12 12 12.5 12.5 14.5C13 16 16 16 16 18C15.5 19.5 12.5 19.5 11.5 18.5" fill="none" stroke="#0a7ac2" stroke-width="1.5"/></svg>
<div class="t" style="left:552px;top:15px;font-size:15px;font-weight:bold">SBR_HMI设置</div>
<svg style="left:662px;top:21px" width="10" height="10" viewBox="0 0 10 10"><path d="M1 1L9 9M9 1L1 9" stroke="#000" stroke-width="1.6"/></svg>
<svg style="left:691px;top:12px" width="23" height="23" viewBox="0 0 23 23"><path d="M3 1H20a2 2 0 0 1 2 2V14a2 2 0 0 1-2 2H10L6 21V16H3a2 2 0 0 1-2-2V3a2 2 0 0 1 2-2Z" fill="#fff" stroke="#66668a" stroke-width="1.5"/><rect x="5" y="4.5" width="12" height="1.3" fill="#0a7ac2"/><rect x="5" y="8" width="12" height="1.3" fill="#0a7ac2"/><rect x="5" y="11.5" width="6" height="1.3" fill="#0a7ac2"/></svg>
<div class="t" style="left:714px;top:15px;font-size:15px">软元件表</div>
<div style="position:absolute;left:394px;top:42px;width:724px;height:2px;background:#7a7a7a"></div>
<div style="position:absolute;left:394px;top:42px;width:2px;height:871px;background:#7a7a7a"></div>
<div style="position:absolute;left:396px;top:44px;width:67px;height:847px;background:#dcdcdc"></div>
<div style="position:absolute;left:462px;top:43px;width:3px;height:848px;background:#0a7cff"></div>
<div style="position:absolute;left:465px;top:44px;width:632px;height:847px;background:#fff"></div>
<div style="position:absolute;left:1097px;top:44px;width:20px;height:848px;background:#f0f0f0"></div>
<svg style="left:1102px;top:51px" width="10" height="7" viewBox="0 0 10 7"><path d="M1 6L5 2L9 6" fill="none" stroke="#606060" stroke-width="2"/></svg>
<svg style="left:1102px;top:878px" width="10" height="7" viewBox="0 0 10 7"><path d="M1 1L5 5L9 1" fill="none" stroke="#606060" stroke-width="2"/></svg>
<div style="position:absolute;left:1098px;top:796px;width:18px;height:21px;background:#cdcdcd"></div>
<div style="position:absolute;left:1117px;top:42px;width:3px;height:876px;background:#f8f8f8"></div>
<div style="position:absolute;left:1122px;top:6px;width:1.5px;height:913px;background:#a0a0a0"></div>
<div style="position:absolute;left:396px;top:891px;width:722px;height:1px;background:#fafafa"></div>
<div style="position:absolute;left:396px;top:892px;width:701px;height:20px;background:#f0f0f0"></div>
<div style="position:absolute;left:1097px;top:892px;width:20px;height:20px;background:#f0f0f0"></div>
<svg style="left:402px;top:897px" width="7" height="10" viewBox="0 0 7 10"><path d="M6 1L2 5L6 9" fill="none" stroke="#606060" stroke-width="2"/></svg>
<svg style="left:1083px;top:897px" width="7" height="10" viewBox="0 0 7 10"><path d="M1 1L5 5L1 9" fill="none" stroke="#606060" stroke-width="2"/></svg>
<div style="position:absolute;left:417px;top:893px;width:125px;height:18px;background:#cdcdcd"></div>
<div style="position:absolute;left:392px;top:913px;width:728px;height:2px;background:#fafafa"></div>
<div style="position:absolute;left:390px;top:918px;width:733px;height:1px;background:#a0a0a0"></div>
<div style="position:absolute;left:465px;top:205px;width:632px;height:38px;background:#dde4e6"></div>
<div style="position:absolute;left:465px;top:205px;width:632px;height:1px;background:#d8d2cc"></div>
<div style="position:absolute;left:465px;top:242px;width:632px;height:1px;background:#e4e4e4"></div>
<div class="t" style="left:471.5px;top:215.5px;font-size:15px;color:#111">网络<span style="font-family:Liberation Mono;font-size:14px;display:inline-block;transform:scaleX(0.8);transform-origin:0 0;vertical-align:-1px">39</span></div>
<div class="t" style="left:577px;top:216.5px;font-size:14.5px;color:#149414">频道复制</div>
<div class="t" style="left:418.5px;top:247px;font-family:Liberation Mono,monospace;font-size:18px;font-weight:bold;transform:scaleX(0.95);transform-origin:0 0">5855</div>
<div class="t" style="left:418.5px;top:402px;font-family:Liberation Mono,monospace;font-size:18px;font-weight:bold;transform:scaleX(0.95);transform-origin:0 0">5863</div>
<div class="t" style="left:418.5px;top:480px;font-family:Liberation Mono,monospace;font-size:18px;font-weight:bold;transform:scaleX(0.95);transform-origin:0 0">5894</div>
<div style="position:absolute;left:465px;top:266.75px;width:152px;height:1.5px;background:#333"></div>
<div style="position:absolute;left:512px;top:260px;width:18px;height:16px;background:#0a7cff;border-left:2px solid #333;border-right:2px solid #333"></div>
<div class="t" style="left:502px;top:245px;font-family:Liberation Mono,monospace;font-size:15px;color:#000;transform:scaleX(0.833);transform-origin:0 0">M8000</div>
<div class="t" style="left:467px;top:283.0px;font-size:11.4px;letter-spacing:1.2px;color:#b02020">程序运行标志，</div>
<div class="t" style="left:467px;top:295.5px;font-size:11.4px;letter-spacing:1.2px;color:#b02020">运行：ON，停止</div>
<div class="t" style="left:467px;top:308.0px;font-size:11.4px;letter-spacing:1.2px;color:#b02020">：OFF</div>
<div style="position:absolute;left:617px;top:259px;width:480px;height:2px;background:#333"></div>
<div style="position:absolute;left:617px;top:259px;width:2px;height:133px;background:#333"></div>
<div style="position:absolute;left:617px;top:390px;width:480px;height:2px;background:#333"></div>
<div style="position:absolute;left:619px;top:261px;width:478px;height:38px;background:#f2f2ed"></div>
<div style="position:absolute;left:619px;top:299px;width:478px;height:2px;background:#6a6a6a"></div>
<div style="position:absolute;left:619px;top:301px;width:2px;height:89px;background:#6a6a6a"></div>
<div style="position:absolute;left:621px;top:301px;width:44px;height:89px;background:#efefef"></div>
<div style="position:absolute;left:665px;top:301px;width:25px;height:89px;background:repeating-linear-gradient(45deg,#ececec 0 1px,#f4f4f4 1px 2px)"></div>
<div style="position:absolute;left:690px;top:301px;width:407px;height:89px;background:#fff"></div>
<div class="t" style="left:983px;top:271px;font-family:Liberation Mono,monospace;font-size:16.5px;font-weight:bold;transform:scaleX(0.88);transform-origin:0 0">EXECUTE</div>
<div class="t" style="left:632.5px;top:308px;font-size:17.5px;color:#222">1</div>
<div class="t" style="left:691.5px;top:307px;font-size:18px;letter-spacing:0.8px;font-weight:bold;color:#ffa200">D175</div>
<div style="position:absolute;left:740px;top:303px;width:75px;height:21px;background:#fdd8b4;border:2px solid #333"></div>
<div class="t" style="left:741px;top:307px;width:71px;text-align:center;font-size:17.5px;color:#222">-500</div>
<div class="t" style="left:818.5px;top:307px;font-family:Liberation Mono,monospace;font-size:16.5px;color:#3c3cf0">:=(</div>
<div class="t" style="left:846.5px;top:307px;font-size:18px;letter-spacing:0.9px;font-weight:bold;color:#ffa200">D1138</div>
<div style="position:absolute;left:906px;top:303px;width:75px;height:21px;background:#fdd8b4;border:2px solid #333"></div>
<div class="t" style="left:908px;top:307px;width:71px;text-align:center;font-size:17.5px;color:#222">0</div>
<div class="t" style="left:984px;top:307px;font-family:Liberation Mono,monospace;font-size:16.5px;"><span style="color:#3c3cf0">-</span><span style="color:#8a1ca8">1</span><span style="color:#3c3cf0">)*</span><span style="color:#8a1ca8">500</span><span style="color:#3c3cf0">;</span></div>
<div class="t" style="left:632.5px;top:331px;font-size:17.5px;color:#222">2</div>
<div class="t" style="left:691.5px;top:330px;font-size:18px;letter-spacing:0.8px;font-weight:bold;color:#ffa200">D176</div>
<div style="position:absolute;left:740px;top:326px;width:75px;height:21px;background:#fdd8b4;border:2px solid #333"></div>
<div class="t" style="left:741px;top:330px;width:71px;text-align:center;font-size:17.5px;color:#222">-1000</div>
<div class="t" style="left:818.5px;top:330px;font-family:Liberation Mono,monospace;font-size:16.5px;color:#3c3cf0">:=(</div>
<div class="t" style="left:846.5px;top:330px;font-size:18px;letter-spacing:0.9px;font-weight:bold;color:#ffa200">D1139</div>
<div style="position:absolute;left:906px;top:326px;width:75px;height:21px;background:#fdd8b4;border:2px solid #333"></div>
<div class="t" style="left:908px;top:330px;width:71px;text-align:center;font-size:17.5px;color:#222">-1</div>
<div class="t" style="left:984px;top:330px;font-family:Liberation Mono,monospace;font-size:16.5px;"><span style="color:#3c3cf0">-</span><span style="color:#8a1ca8">1</span><span style="color:#3c3cf0">)*</span><span style="color:#8a1ca8">500</span><span style="color:#3c3cf0">;</span></div>
<div style="position:absolute;left:465px;top:421.75px;width:49px;height:1.5px;background:#333"></div>
<div style="position:absolute;left:529px;top:421.75px;width:58px;height:1.5px;background:#333"></div>
<div style="position:absolute;left:513.25px;top:415px;width:1.5px;height:15px;background:#333"></div>
<div style="position:absolute;left:527.75px;top:415px;width:1.5px;height:15px;background:#333"></div>
<svg style="left:516px;top:416px" width="10" height="15" viewBox="0 0 10 15"><path d="M5 2V15M1.5 6L5 1.5L8.5 6" fill="none" stroke="#111" stroke-width="1.6"/></svg>
<div class="t" style="left:509px;top:400px;font-family:Liberation Mono,monospace;font-size:15px;color:#000;transform:scaleX(0.833);transform-origin:0 0">M58</div>
<div class="t" style="left:474px;top:435px;font-size:15px;color:#a01818">复制频道确认</div>
<svg style="left:587px;top:414.5px" width="7" height="17" viewBox="0 0 7 17"><path d="M6.5 0.75H1V16.25H6.5" fill="none" stroke="#333" stroke-width="1.5"/></svg>
<div class="t" style="left:624px;top:416px;font-family:Liberation Mono,monospace;font-size:15px;color:#000;transform:scaleX(0.833);transform-origin:0 0">&lt;&gt;</div>
<div class="t" style="left:693px;top:400px;font-family:Liberation Mono,monospace;font-size:15px;color:#1a8cff;transform:scaleX(0.833);transform-origin:0 0">0</div>
<div class="t" style="left:693px;top:415px;font-family:Liberation Mono,monospace;font-size:15px;color:#000;transform:scaleX(0.833);transform-origin:0 0">D1138</div>
<div class="t" style="left:692.5px;top:435px;font-size:15.5px;color:#a01818">当前频道</div>
<div class="t" style="left:806px;top:400px;font-family:Liberation Mono,monospace;font-size:15px;color:#1a8cff;transform:scaleX(0.833);transform-origin:0 0">-1</div>
<div class="t" style="left:806px;top:415px;font-family:Liberation Mono,monospace;font-size:15px;color:#000;transform:scaleX(0.833);transform-origin:0 0">D1139</div>
<div class="t" style="left:805.5px;top:435px;font-size:15.5px;color:#a01818">复制频道</div>
<svg style="left:906px;top:414.5px" width="7" height="17" viewBox="0 0 7 17"><path d="M0.5 0.75H6V16.25H0.5" fill="none" stroke="#333" stroke-width="1.5"/></svg>
<div style="position:absolute;left:912px;top:421.75px;width:13px;height:1.5px;background:#333"></div>
<svg style="left:925px;top:414.5px" width="7" height="17" viewBox="0 0 7 17"><path d="M6.5 0.75H1V16.25H6.5" fill="none" stroke="#333" stroke-width="1.5"/></svg>
<div class="t" style="left:962px;top:416px;font-family:Liberation Mono,monospace;font-size:15px;color:#000;transform:scaleX(0.833);transform-origin:0 0">&gt;=</div>
<div class="t" style="left:1030px;top:400px;font-family:Liberation Mono,monospace;font-size:15px;color:#1a8cff;transform:scaleX(0.833);transform-origin:0 0">0</div>
<div class="t" style="left:1030px;top:415px;font-family:Liberation Mono,monospace;font-size:15px;color:#000;transform:scaleX(0.833);transform-origin:0 0">D1138</div>
<div class="t" style="left:1029.5px;top:435px;font-size:15.5px;color:#a01818">当前频道</div>
<div style="position:absolute;left:465px;top:499.25px;width:49px;height:1.5px;background:#333"></div>
<div style="position:absolute;left:529px;top:499.25px;width:58px;height:1.5px;background:#333"></div>
<div style="position:absolute;left:513.75px;top:493px;width:1.5px;height:15px;background:#333"></div>
<div style="position:absolute;left:528.25px;top:493px;width:1.5px;height:15px;background:#333"></div>
<div class="t" style="left:509px;top:478px;font-family:Liberation Mono,monospace;font-size:15px;color:#000;transform:scaleX(0.833);transform-origin:0 0">M72</div>
<div class="t" style="left:474px;top:513px;font-size:15px;color:#a01818">频道复制变量</div>
<div style="position:absolute;left:576.75px;top:500px;width:1.5px;height:391px;background:#333"></div>
<svg style="left:587px;top:492px" width="7" height="17" viewBox="0 0 7 17"><path d="M6.5 0.75H1V16.25H6.5" fill="none" stroke="#333" stroke-width="1.5"/></svg>
<div class="t" style="left:611px;top:493px;font-family:Liberation Mono,monospace;font-size:15px;color:#000;transform:scaleX(0.833);transform-origin:0 0">PTGET</div>
<div class="t" style="left:693px;top:478px;font-family:Liberation Mono,monospace;font-size:15px;color:#1a8cff;transform:scaleX(0.833);transform-origin:0 0">0x0057A480</div>
<div class="t" style="left:693px;top:493px;font-family:Liberation Mono,monospace;font-size:15px;color:#000;transform:scaleX(0.833);transform-origin:0 0">PT0</div>
<div class="t" style="left:806px;top:478px;font-family:Liberation Mono,monospace;font-size:15px;color:#1a8cff;transform:scaleX(0.833);transform-origin:0 0">1</div>
<div class="t" style="left:806px;top:493px;font-family:Liberation Mono,monospace;font-size:15px;color:#000;transform:scaleX(0.833);transform-origin:0 0">R1000</div>
<svg style="left:906px;top:492px" width="7" height="17" viewBox="0 0 7 17"><path d="M0.5 0.75H6V16.25H0.5" fill="none" stroke="#333" stroke-width="1.5"/></svg>
<div style="position:absolute;left:577.5px;top:576.25px;width:9.5px;height:1.5px;background:#333"></div>
<svg style="left:587px;top:569px" width="7" height="17" viewBox="0 0 7 17"><path d="M6.5 0.75H1V16.25H6.5" fill="none" stroke="#333" stroke-width="1.5"/></svg>
<div class="t" style="left:612px;top:570px;font-family:Liberation Mono,monospace;font-size:15px;color:#000;transform:scaleX(0.833);transform-origin:0 0">PTADD</div>
<div class="t" style="left:693px;top:555px;font-family:Liberation Mono,monospace;font-size:15px;color:#1a8cff;transform:scaleX(0.833);transform-origin:0 0">0x0057A480</div>
<div class="t" style="left:693px;top:570px;font-family:Liberation Mono,monospace;font-size:15px;color:#000;transform:scaleX(0.833);transform-origin:0 0">PT0</div>
<div class="t" style="left:806px;top:555px;font-family:Liberation Mono,monospace;font-size:15px;color:#1a8cff;transform:scaleX(0.833);transform-origin:0 0">-500</div>
<div class="t" style="left:806px;top:570px;font-family:Liberation Mono,monospace;font-size:15px;color:#000;transform:scaleX(0.833);transform-origin:0 0">D175</div>
<div class="t" style="left:918px;top:555px;font-family:Liberation Mono,monospace;font-size:15px;color:#1a8cff;transform:scaleX(0.833);transform-origin:0 0">0x0057A480</div>
<div class="t" style="left:918px;top:570px;font-family:Liberation Mono,monospace;font-size:15px;color:#000;transform:scaleX(0.833);transform-origin:0 0">PT0</div>
<svg style="left:1018px;top:569px" width="7" height="17" viewBox="0 0 7 17"><path d="M0.5 0.75H6V16.25H0.5" fill="none" stroke="#333" stroke-width="1.5"/></svg>
<div class="t" style="left:805px;top:592.5px;font-size:14.5px;color:#a01818">频道复制当前地</div>
<div class="t" style="left:805px;top:606px;font-size:14.5px;color:#a01818">址</div>
<div style="position:absolute;left:577.5px;top:654.25px;width:9.5px;height:1.5px;background:#333"></div>
<svg style="left:587px;top:647px" width="7" height="17" viewBox="0 0 7 17"><path d="M6.5 0.75H1V16.25H6.5" fill="none" stroke="#333" stroke-width="1.5"/></svg>
<div class="t" style="left:611px;top:648px;font-family:Liberation Mono,monospace;font-size:15px;color:#000;transform:scaleX(0.833);transform-origin:0 0">PTGET</div>
<div class="t" style="left:693px;top:633px;font-family:Liberation Mono,monospace;font-size:15px;color:#1a8cff;transform:scaleX(0.833);transform-origin:0 0">NULL</div>
<div class="t" style="left:693px;top:648px;font-family:Liberation Mono,monospace;font-size:15px;color:#000;transform:scaleX(0.833);transform-origin:0 0">PT1</div>
<div class="t" style="left:806px;top:633px;font-family:Liberation Mono,monospace;font-size:15px;color:#1a8cff;transform:scaleX(0.833);transform-origin:0 0">1</div>
<div class="t" style="left:806px;top:648px;font-family:Liberation Mono,monospace;font-size:15px;color:#000;transform:scaleX(0.833);transform-origin:0 0">R1000</div>
<svg style="left:906px;top:647px" width="7" height="17" viewBox="0 0 7 17"><path d="M0.5 0.75H6V16.25H0.5" fill="none" stroke="#333" stroke-width="1.5"/></svg>
<div style="position:absolute;left:577.5px;top:731.25px;width:9.5px;height:1.5px;background:#333"></div>
<svg style="left:587px;top:724px" width="7" height="17" viewBox="0 0 7 17"><path d="M6.5 0.75H1V16.25H6.5" fill="none" stroke="#333" stroke-width="1.5"/></svg>
<div class="t" style="left:612px;top:725px;font-family:Liberation Mono,monospace;font-size:15px;color:#000;transform:scaleX(0.833);transform-origin:0 0">PTADD</div>
<div class="t" style="left:693px;top:710px;font-family:Liberation Mono,monospace;font-size:15px;color:#1a8cff;transform:scaleX(0.833);transform-origin:0 0">NULL</div>
<div class="t" style="left:693px;top:725px;font-family:Liberation Mono,monospace;font-size:15px;color:#000;transform:scaleX(0.833);transform-origin:0 0">PT1</div>
<div class="t" style="left:806px;top:710px;font-family:Liberation Mono,monospace;font-size:15px;color:#1a8cff;transform:scaleX(0.833);transform-origin:0 0">-1000</div>
<div class="t" style="left:806px;top:725px;font-family:Liberation Mono,monospace;font-size:15px;color:#000;transform:scaleX(0.833);transform-origin:0 0">D176</div>
<div class="t" style="left:918px;top:710px;font-family:Liberation Mono,monospace;font-size:15px;color:#1a8cff;transform:scaleX(0.833);transform-origin:0 0">NULL</div>
<div class="t" style="left:918px;top:725px;font-family:Liberation Mono,monospace;font-size:15px;color:#000;transform:scaleX(0.833);transform-origin:0 0">PT1</div>
<svg style="left:1018px;top:724px" width="7" height="17" viewBox="0 0 7 17"><path d="M0.5 0.75H6V16.25H0.5" fill="none" stroke="#333" stroke-width="1.5"/></svg>
<div class="t" style="left:805px;top:747.5px;font-size:14.5px;color:#a01818">频道复制复制地</div>
<div class="t" style="left:805px;top:761px;font-size:14.5px;color:#a01818">址</div>
<div style="position:absolute;left:577.5px;top:809.25px;width:9.5px;height:1.5px;background:#333"></div>
<svg style="left:587px;top:802px" width="7" height="17" viewBox="0 0 7 17"><path d="M6.5 0.75H1V16.25H6.5" fill="none" stroke="#333" stroke-width="1.5"/></svg>
<div class="t" style="left:615px;top:803px;font-family:Liberation Mono,monospace;font-size:15px;color:#000;transform:scaleX(0.833);transform-origin:0 0">BMOV</div>
<div class="t" style="left:693px;top:788px;font-family:Liberation Mono,monospace;font-size:15px;color:#1a8cff;transform:scaleX(0.833);transform-origin:0 0">13107</div>
<div class="t" style="left:693px;top:803px;font-family:Liberation Mono,monospace;font-size:15px;color:#000;transform:scaleX(0.833);transform-origin:0 0">*PT0</div>
<div class="t" style="left:806px;top:788px;font-family:Liberation Mono,monospace;font-size:15px;color:#1a8cff;transform:scaleX(0.833);transform-origin:0 0">NULL</div>
<div class="t" style="left:806px;top:803px;font-family:Liberation Mono,monospace;font-size:15px;color:#000;transform:scaleX(0.833);transform-origin:0 0">*PT1</div>
<div class="t" style="left:918px;top:803px;font-family:Liberation Mono,monospace;font-size:15px;color:#000;transform:scaleX(0.833);transform-origin:0 0">K100</div>
<svg style="left:1018px;top:802px" width="7" height="17" viewBox="0 0 7 17"><path d="M0.5 0.75H6V16.25H0.5" fill="none" stroke="#333" stroke-width="1.5"/></svg>
<div style="position:absolute;left:577.5px;top:886.25px;width:9.5px;height:1.5px;background:#333"></div>
<svg style="left:587px;top:879px" width="7" height="17" viewBox="0 0 7 17"><path d="M6.5 0.75H1V16.25H6.5" fill="none" stroke="#333" stroke-width="1.5"/></svg>
<div class="t" style="left:611px;top:880px;font-family:Liberation Mono,monospace;font-size:15px;color:#000;transform:scaleX(0.833);transform-origin:0 0">PTGET</div>
<div class="t" style="left:693px;top:865px;font-family:Liberation Mono,monospace;font-size:15px;color:#1a8cff;transform:scaleX(0.833);transform-origin:0 0">0x0057A480</div>
<div class="t" style="left:693px;top:880px;font-family:Liberation Mono,monospace;font-size:15px;color:#000;transform:scaleX(0.833);transform-origin:0 0">PT0</div>
<div class="t" style="left:806px;top:865px;font-family:Liberation Mono,monospace;font-size:15px;color:#1a8cff;transform:scaleX(0.833);transform-origin:0 0">0</div>
<div class="t" style="left:806px;top:880px;font-family:Liberation Mono,monospace;font-size:15px;color:#000;transform:scaleX(0.833);transform-origin:0 0">R1100</div>
<svg style="left:906px;top:879px" width="7" height="17" viewBox="0 0 7 17"><path d="M0.5 0.75H6V16.25H0.5" fill="none" stroke="#333" stroke-width="1.5"/></svg>
<div style="position:absolute;left:465px;top:891px;width:632px;height:1px;background:#fafafa"></div>
<div style="position:absolute;left:396px;top:892px;width:701px;height:20px;background:#f0f0f0"></div>
<svg style="left:402px;top:897px" width="7" height="10" viewBox="0 0 7 10"><path d="M6 1L2 5L6 9" fill="none" stroke="#606060" stroke-width="2"/></svg>
<svg style="left:1083px;top:897px" width="7" height="10" viewBox="0 0 7 10"><path d="M1 1L5 5L1 9" fill="none" stroke="#606060" stroke-width="2"/></svg>
<div style="position:absolute;left:417px;top:893px;width:125px;height:18px;background:#cdcdcd"></div>
<div style="position:absolute;left:396px;top:44px;width:67px;height:847px;background:transparent"></div>
<div class="t" style="left:1133px;top:14px;font-size:15.5px">信息输出窗口</div>
<svg style="left:1762px;top:18px" width="10" height="11" viewBox="0 0 10 11"><rect x="2.6" y="0.7" width="5.2" height="5.3" fill="none" stroke="#000" stroke-width="1.4"/><rect x="2" y="0" width="2.6" height="6" fill="#000"/><rect x="0.5" y="5.6" width="9" height="1.7" fill="#000"/><rect x="4" y="7" width="1.5" height="3.6" fill="#000"/></svg>
<svg style="left:1783px;top:18px" width="10" height="10" viewBox="0 0 10 10"><path d="M1 1L9 9M9 1L1 9" stroke="#000" stroke-width="2"/></svg>
<div style="position:absolute;left:1131px;top:42px;width:666px;height:850px;background:#f0f0f0"></div>
<div style="position:absolute;left:1131px;top:42px;width:666px;height:2px;background:#a0a0a0"></div>
<div style="position:absolute;left:1131px;top:44px;width:666px;height:2px;background:#696969"></div>
<div style="position:absolute;left:1131px;top:42px;width:2px;height:850px;background:#a0a0a0"></div>
<div style="position:absolute;left:1133px;top:44px;width:2px;height:848px;background:#696969"></div>
<div style="position:absolute;left:1797px;top:42px;width:2px;height:851px;background:#fdfdfd"></div>
<div style="position:absolute;left:1799px;top:42px;width:2px;height:876px;background:#a0a0a0"></div>
<div style="position:absolute;left:1135px;top:46px;width:638px;height:825px;background:#fff"></div>
<div style="position:absolute;left:1135px;top:46px;width:638px;height:21px;background:#f0f0f0"></div>
<div style="position:absolute;left:1136px;top:47px;width:64px;height:19px;background:#0080ff"></div>
<div class="t" style="left:1204px;top:48px;font-size:15px;color:#222">元件名称</div>
<div class="t" style="left:1363px;top:48px;font-size:15px;color:#222">数据类型</div>
<div class="t" style="left:1463px;top:48px;font-size:15px;color:#222">显示格式</div>
<div class="t" style="left:1562px;top:48px;font-size:15px;color:#222">当前值</div>
<div class="t" style="left:1728px;top:48px;font-size:15px;color:#222">注释</div>
<div style="position:absolute;left:1200px;top:46px;width:1px;height:825px;background:#c0c0c0"></div>
<div style="position:absolute;left:1359px;top:46px;width:1px;height:825px;background:#c0c0c0"></div>
<div style="position:absolute;left:1458px;top:46px;width:1px;height:825px;background:#c0c0c0"></div>
<div style="position:absolute;left:1559px;top:46px;width:1px;height:825px;background:#c0c0c0"></div>
<div style="position:absolute;left:1725px;top:46px;width:1px;height:825px;background:#c0c0c0"></div>
<div style="position:absolute;left:1773px;top:46px;width:1px;height:825px;background:#c0c0c0"></div>
<div style="position:absolute;left:1135px;top:66px;width:638px;height:1px;background:#b4b4b4"></div>
<div style="position:absolute;left:1136px;top:68px;width:64px;height:19px;background:#0080ff"></div>
<div style="position:absolute;left:1136px;top:67px;width:64px;height:1px;background:#e0f0ff"></div>
<div style="position:absolute;left:1135px;top:87px;width:638px;height:1px;background:#c0c0c0"></div>
<div class="t" style="left:1146px;top:73px;font-size:14px;color:#000">19</div>
<div class="t" style="left:1203.5px;top:74px;font-family:Liberation Mono,monospace;font-size:15px;transform:scaleX(0.833);transform-origin:0 0;">...</div>
<div style="position:absolute;left:1225px;top:67px;width:1px;height:21px;background:#c0c0c0"></div>
<div class="t" style="left:1245px;top:74px;font-family:Liberation Mono,monospace;font-size:15px;transform:scaleX(0.833);transform-origin:0 0;">R31000</div>
<div class="t" style="left:1363px;top:74px;font-family:Liberation Mono,monospace;font-size:15px;transform:scaleX(0.833);transform-origin:0 0;">INT</div>
<div class="t" style="left:1462px;top:72px;font-size:15px">十进制</div>
<div class="t" style="left:1562px;top:73px;font-size:14px">1</div>
<div style="position:absolute;left:1136px;top:89px;width:64px;height:20px;background:#0080ff"></div>
<div style="position:absolute;left:1136px;top:88px;width:64px;height:1px;background:#e0f0ff"></div>
<div style="position:absolute;left:1135px;top:109px;width:638px;height:1px;background:#c0c0c0"></div>
<div class="t" style="left:1146px;top:94px;font-size:14px;color:#000">20</div>
<div class="t" style="left:1203.5px;top:95px;font-family:Liberation Mono,monospace;font-size:15px;transform:scaleX(0.833);transform-origin:0 0;">...</div>
<div style="position:absolute;left:1225px;top:88px;width:1px;height:22px;background:#c0c0c0"></div>
<div class="t" style="left:1245px;top:95px;font-family:Liberation Mono,monospace;font-size:15px;transform:scaleX(0.833);transform-origin:0 0;">R31001</div>
<div class="t" style="left:1363px;top:95px;font-family:Liberation Mono,monospace;font-size:15px;transform:scaleX(0.833);transform-origin:0 0;">INT</div>
<div class="t" style="left:1462px;top:93px;font-size:15px">十进制</div>
<div class="t" style="left:1562px;top:94px;font-size:14px">3</div>
<div style="position:absolute;left:1136px;top:111px;width:64px;height:19px;background:#0080ff"></div>
<div style="position:absolute;left:1136px;top:110px;width:64px;height:1px;background:#e0f0ff"></div>
<div style="position:absolute;left:1135px;top:130px;width:638px;height:1px;background:#c0c0c0"></div>
<div class="t" style="left:1146px;top:116px;font-size:14px;color:#000">21</div>
<div class="t" style="left:1203.5px;top:117px;font-family:Liberation Mono,monospace;font-size:15px;transform:scaleX(0.833);transform-origin:0 0;">...</div>
<div style="position:absolute;left:1225px;top:110px;width:1px;height:21px;background:#c0c0c0"></div>
<div class="t" style="left:1245px;top:117px;font-family:Liberation Mono,monospace;font-size:15px;transform:scaleX(0.833);transform-origin:0 0;">R31002</div>
<div class="t" style="left:1363px;top:117px;font-family:Liberation Mono,monospace;font-size:15px;transform:scaleX(0.833);transform-origin:0 0;">INT</div>
<div class="t" style="left:1462px;top:115px;font-size:15px">十进制</div>
<div class="t" style="left:1562px;top:116px;font-size:14px">5</div>
<div style="position:absolute;left:1136px;top:132px;width:64px;height:19px;background:#0080ff"></div>
<div style="position:absolute;left:1136px;top:131px;width:64px;height:1px;background:#e0f0ff"></div>
<div style="position:absolute;left:1135px;top:151px;width:638px;height:1px;background:#c0c0c0"></div>
<div class="t" style="left:1146px;top:137px;font-size:14px;color:#000">22</div>
<div class="t" style="left:1203.5px;top:138px;font-family:Liberation Mono,monospace;font-size:15px;transform:scaleX(0.833);transform-origin:0 0;">...</div>
<div style="position:absolute;left:1225px;top:131px;width:1px;height:21px;background:#c0c0c0"></div>
<div class="t" style="left:1245px;top:138px;font-family:Liberation Mono,monospace;font-size:15px;transform:scaleX(0.833);transform-origin:0 0;">R31003</div>
<div class="t" style="left:1363px;top:138px;font-family:Liberation Mono,monospace;font-size:15px;transform:scaleX(0.833);transform-origin:0 0;">INT</div>
<div class="t" style="left:1462px;top:136px;font-size:15px">十进制</div>
<div class="t" style="left:1562px;top:137px;font-size:14px">7</div>
<div style="position:absolute;left:1136px;top:153px;width:64px;height:19px;background:#0080ff"></div>
<div style="position:absolute;left:1136px;top:152px;width:64px;height:1px;background:#e0f0ff"></div>
<div style="position:absolute;left:1135px;top:172px;width:638px;height:1px;background:#c0c0c0"></div>
<div class="t" style="left:1146px;top:158px;font-size:14px;color:#000">23</div>
<div class="t" style="left:1203.5px;top:159px;font-family:Liberation Mono,monospace;font-size:15px;transform:scaleX(0.833);transform-origin:0 0;">...</div>
<div style="position:absolute;left:1225px;top:152px;width:1px;height:21px;background:#c0c0c0"></div>
<div class="t" style="left:1245px;top:159px;font-family:Liberation Mono,monospace;font-size:15px;transform:scaleX(0.833);transform-origin:0 0;">R31004</div>
<div class="t" style="left:1363px;top:159px;font-family:Liberation Mono,monospace;font-size:15px;transform:scaleX(0.833);transform-origin:0 0;">INT</div>
<div class="t" style="left:1462px;top:157px;font-size:15px">十进制</div>
<div class="t" style="left:1562px;top:158px;font-size:14px">9</div>
<div style="position:absolute;left:1136px;top:174px;width:64px;height:20px;background:#0080ff"></div>
<div style="position:absolute;left:1136px;top:173px;width:64px;height:1px;background:#e0f0ff"></div>
<div style="position:absolute;left:1135px;top:194px;width:638px;height:1px;background:#c0c0c0"></div>
<div class="t" style="left:1146px;top:179px;font-size:14px;color:#000">24</div>
<div class="t" style="left:1203.5px;top:180px;font-family:Liberation Mono,monospace;font-size:15px;transform:scaleX(0.833);transform-origin:0 0;">...</div>
<div style="position:absolute;left:1225px;top:173px;width:1px;height:22px;background:#c0c0c0"></div>
<div class="t" style="left:1245px;top:180px;font-family:Liberation Mono,monospace;font-size:15px;transform:scaleX(0.833);transform-origin:0 0;">R31005</div>
<div class="t" style="left:1363px;top:180px;font-family:Liberation Mono,monospace;font-size:15px;transform:scaleX(0.833);transform-origin:0 0;">INT</div>
<div class="t" style="left:1462px;top:178px;font-size:15px">十进制</div>
<div class="t" style="left:1562px;top:179px;font-size:14px">11</div>
<div style="position:absolute;left:1136px;top:196px;width:64px;height:19px;background:#0080ff"></div>
<div style="position:absolute;left:1136px;top:195px;width:64px;height:1px;background:#e0f0ff"></div>
<div style="position:absolute;left:1135px;top:215px;width:638px;height:1px;background:#c0c0c0"></div>
<div class="t" style="left:1146px;top:201px;font-size:14px;color:#000">25</div>
<div class="t" style="left:1203.5px;top:202px;font-family:Liberation Mono,monospace;font-size:15px;transform:scaleX(0.833);transform-origin:0 0;">...</div>
<div style="position:absolute;left:1225px;top:195px;width:1px;height:21px;background:#c0c0c0"></div>
<div class="t" style="left:1245px;top:202px;font-family:Liberation Mono,monospace;font-size:15px;transform:scaleX(0.833);transform-origin:0 0;">R31006</div>
<div class="t" style="left:1363px;top:202px;font-family:Liberation Mono,monospace;font-size:15px;transform:scaleX(0.833);transform-origin:0 0;">INT</div>
<div class="t" style="left:1462px;top:200px;font-size:15px">十进制</div>
<div class="t" style="left:1562px;top:201px;font-size:14px">13</div>
<div style="position:absolute;left:1136px;top:217px;width:64px;height:19px;background:#0080ff"></div>
<div style="position:absolute;left:1136px;top:216px;width:64px;height:1px;background:#e0f0ff"></div>
<div style="position:absolute;left:1135px;top:236px;width:638px;height:1px;background:#c0c0c0"></div>
<div class="t" style="left:1146px;top:222px;font-size:14px;color:#000">26</div>
<div class="t" style="left:1203.5px;top:223px;font-family:Liberation Mono,monospace;font-size:15px;transform:scaleX(0.833);transform-origin:0 0;">...</div>
<div style="position:absolute;left:1225px;top:216px;width:1px;height:21px;background:#c0c0c0"></div>
<div class="t" style="left:1245px;top:223px;font-family:Liberation Mono,monospace;font-size:15px;transform:scaleX(0.833);transform-origin:0 0;">R31007</div>
<div class="t" style="left:1363px;top:223px;font-family:Liberation Mono,monospace;font-size:15px;transform:scaleX(0.833);transform-origin:0 0;">INT</div>
<div class="t" style="left:1462px;top:221px;font-size:15px">十进制</div>
<div class="t" style="left:1562px;top:222px;font-size:14px">15</div>
<div style="position:absolute;left:1136px;top:238px;width:64px;height:19px;background:#0080ff"></div>
<div style="position:absolute;left:1136px;top:237px;width:64px;height:1px;background:#e0f0ff"></div>
<div style="position:absolute;left:1135px;top:257px;width:638px;height:1px;background:#c0c0c0"></div>
<div class="t" style="left:1146px;top:243px;font-size:14px;color:#000">27</div>
<div class="t" style="left:1203.5px;top:244px;font-family:Liberation Mono,monospace;font-size:15px;transform:scaleX(0.833);transform-origin:0 0;">...</div>
<div style="position:absolute;left:1225px;top:237px;width:1px;height:21px;background:#c0c0c0"></div>
<div class="t" style="left:1245px;top:244px;font-family:Liberation Mono,monospace;font-size:15px;transform:scaleX(0.833);transform-origin:0 0;">R31008</div>
<div class="t" style="left:1363px;top:244px;font-family:Liberation Mono,monospace;font-size:15px;transform:scaleX(0.833);transform-origin:0 0;">INT</div>
<div class="t" style="left:1462px;top:242px;font-size:15px">十进制</div>
<div class="t" style="left:1562px;top:243px;font-size:14px">17</div>
<div style="position:absolute;left:1136px;top:259px;width:64px;height:20px;background:#0080ff"></div>
<div style="position:absolute;left:1136px;top:258px;width:64px;height:1px;background:#e0f0ff"></div>
<div style="position:absolute;left:1135px;top:279px;width:638px;height:1px;background:#c0c0c0"></div>
<div class="t" style="left:1146px;top:264px;font-size:14px;color:#000">28</div>
<div class="t" style="left:1203.5px;top:265px;font-family:Liberation Mono,monospace;font-size:15px;transform:scaleX(0.833);transform-origin:0 0;">...</div>
<div style="position:absolute;left:1225px;top:258px;width:1px;height:22px;background:#c0c0c0"></div>
<div class="t" style="left:1245px;top:265px;font-family:Liberation Mono,monospace;font-size:15px;transform:scaleX(0.833);transform-origin:0 0;">R31009</div>
<div class="t" style="left:1363px;top:265px;font-family:Liberation Mono,monospace;font-size:15px;transform:scaleX(0.833);transform-origin:0 0;">INT</div>
<div class="t" style="left:1462px;top:263px;font-size:15px">十进制</div>
<div class="t" style="left:1562px;top:264px;font-size:14px">19</div>
<div style="position:absolute;left:1136px;top:281px;width:64px;height:19px;background:#0080ff"></div>
<div style="position:absolute;left:1136px;top:280px;width:64px;height:1px;background:#e0f0ff"></div>
<div style="position:absolute;left:1135px;top:300px;width:638px;height:1px;background:#c0c0c0"></div>
<div class="t" style="left:1146px;top:286px;font-size:14px;color:#000">29</div>
<div class="t" style="left:1203.5px;top:287px;font-family:Liberation Mono,monospace;font-size:15px;transform:scaleX(0.833);transform-origin:0 0;">...</div>
<div style="position:absolute;left:1225px;top:280px;width:1px;height:21px;background:#c0c0c0"></div>
<div class="t" style="left:1245px;top:287px;font-family:Liberation Mono,monospace;font-size:15px;transform:scaleX(0.833);transform-origin:0 0;">R31010</div>
<div class="t" style="left:1363px;top:287px;font-family:Liberation Mono,monospace;font-size:15px;transform:scaleX(0.833);transform-origin:0 0;">INT</div>
<div class="t" style="left:1462px;top:285px;font-size:15px">十进制</div>
<div class="t" style="left:1562px;top:286px;font-size:14px">21</div>
<div style="position:absolute;left:1136px;top:302px;width:64px;height:19px;background:#0080ff"></div>
<div style="position:absolute;left:1136px;top:301px;width:64px;height:1px;background:#e0f0ff"></div>
<div style="position:absolute;left:1135px;top:321px;width:638px;height:1px;background:#c0c0c0"></div>
<div class="t" style="left:1146px;top:307px;font-size:14px;color:#000">30</div>
<div class="t" style="left:1203.5px;top:308px;font-family:Liberation Mono,monospace;font-size:15px;transform:scaleX(0.833);transform-origin:0 0;">...</div>
<div style="position:absolute;left:1225px;top:301px;width:1px;height:21px;background:#c0c0c0"></div>
<div class="t" style="left:1245px;top:308px;font-family:Liberation Mono,monospace;font-size:15px;transform:scaleX(0.833);transform-origin:0 0;">R31011</div>
<div class="t" style="left:1363px;top:308px;font-family:Liberation Mono,monospace;font-size:15px;transform:scaleX(0.833);transform-origin:0 0;">INT</div>
<div class="t" style="left:1462px;top:306px;font-size:15px">十进制</div>
<div class="t" style="left:1562px;top:307px;font-size:14px">23</div>
<div style="position:absolute;left:1136px;top:323px;width:64px;height:20px;background:#0080ff"></div>
<div style="position:absolute;left:1136px;top:322px;width:64px;height:1px;background:#e0f0ff"></div>
<div style="position:absolute;left:1135px;top:343px;width:638px;height:1px;background:#c0c0c0"></div>
<div class="t" style="left:1146px;top:328px;font-size:14px;color:#000">31</div>
<div class="t" style="left:1203.5px;top:329px;font-family:Liberation Mono,monospace;font-size:15px;transform:scaleX(0.833);transform-origin:0 0;">...</div>
<div style="position:absolute;left:1225px;top:322px;width:1px;height:22px;background:#c0c0c0"></div>
<div class="t" style="left:1245px;top:329px;font-family:Liberation Mono,monospace;font-size:15px;transform:scaleX(0.833);transform-origin:0 0;">R31012</div>
<div class="t" style="left:1363px;top:329px;font-family:Liberation Mono,monospace;font-size:15px;transform:scaleX(0.833);transform-origin:0 0;">INT</div>
<div class="t" style="left:1462px;top:327px;font-size:15px">十进制</div>
<div class="t" style="left:1562px;top:328px;font-size:14px">25</div>
<div style="position:absolute;left:1136px;top:345px;width:64px;height:19px;background:#0080ff"></div>
<div style="position:absolute;left:1136px;top:344px;width:64px;height:1px;background:#e0f0ff"></div>
<div style="position:absolute;left:1135px;top:364px;width:638px;height:1px;background:#c0c0c0"></div>
<div class="t" style="left:1146px;top:350px;font-size:14px;color:#000">32</div>
<div class="t" style="left:1203.5px;top:351px;font-family:Liberation Mono,monospace;font-size:15px;transform:scaleX(0.833);transform-origin:0 0;">...</div>
<div style="position:absolute;left:1225px;top:344px;width:1px;height:21px;background:#c0c0c0"></div>
<div class="t" style="left:1245px;top:351px;font-family:Liberation Mono,monospace;font-size:15px;transform:scaleX(0.833);transform-origin:0 0;">R31013</div>
<div class="t" style="left:1363px;top:351px;font-family:Liberation Mono,monospace;font-size:15px;transform:scaleX(0.833);transform-origin:0 0;">INT</div>
<div class="t" style="left:1462px;top:349px;font-size:15px">十进制</div>
<div class="t" style="left:1562px;top:350px;font-size:14px">27</div>
<div style="position:absolute;left:1136px;top:366px;width:64px;height:19px;background:#0080ff"></div>
<div style="position:absolute;left:1136px;top:365px;width:64px;height:1px;background:#e0f0ff"></div>
<div style="position:absolute;left:1135px;top:385px;width:638px;height:1px;background:#c0c0c0"></div>
<div class="t" style="left:1146px;top:371px;font-size:14px;color:#000">33</div>
<div class="t" style="left:1203.5px;top:372px;font-family:Liberation Mono,monospace;font-size:15px;transform:scaleX(0.833);transform-origin:0 0;">...</div>
<div style="position:absolute;left:1225px;top:365px;width:1px;height:21px;background:#c0c0c0"></div>
<div class="t" style="left:1245px;top:372px;font-family:Liberation Mono,monospace;font-size:15px;transform:scaleX(0.833);transform-origin:0 0;">R31014</div>
<div class="t" style="left:1363px;top:372px;font-family:Liberation Mono,monospace;font-size:15px;transform:scaleX(0.833);transform-origin:0 0;">INT</div>
<div class="t" style="left:1462px;top:370px;font-size:15px">十进制</div>
<div class="t" style="left:1562px;top:371px;font-size:14px">29</div>
<div style="position:absolute;left:1136px;top:387px;width:64px;height:19px;background:#0080ff"></div>
<div style="position:absolute;left:1136px;top:386px;width:64px;height:1px;background:#e0f0ff"></div>
<div style="position:absolute;left:1135px;top:406px;width:638px;height:1px;background:#c0c0c0"></div>
<div class="t" style="left:1146px;top:392px;font-size:14px;color:#000">34</div>
<div class="t" style="left:1203.5px;top:393px;font-family:Liberation Mono,monospace;font-size:15px;transform:scaleX(0.833);transform-origin:0 0;">...</div>
<div style="position:absolute;left:1225px;top:386px;width:1px;height:21px;background:#c0c0c0"></div>
<div class="t" style="left:1245px;top:393px;font-family:Liberation Mono,monospace;font-size:15px;transform:scaleX(0.833);transform-origin:0 0;">R31015</div>
<div class="t" style="left:1363px;top:393px;font-family:Liberation Mono,monospace;font-size:15px;transform:scaleX(0.833);transform-origin:0 0;">INT</div>
<div class="t" style="left:1462px;top:391px;font-size:15px">十进制</div>
<div class="t" style="left:1562px;top:392px;font-size:14px">31</div>
<div style="position:absolute;left:1136px;top:408px;width:64px;height:20px;background:#0080ff"></div>
<div style="position:absolute;left:1136px;top:407px;width:64px;height:1px;background:#e0f0ff"></div>
<div style="position:absolute;left:1135px;top:428px;width:638px;height:1px;background:#c0c0c0"></div>
<div class="t" style="left:1146px;top:413px;font-size:14px;color:#000">35</div>
<div class="t" style="left:1203.5px;top:414px;font-family:Liberation Mono,monospace;font-size:15px;transform:scaleX(0.833);transform-origin:0 0;">...</div>
<div style="position:absolute;left:1225px;top:407px;width:1px;height:22px;background:#c0c0c0"></div>
<div class="t" style="left:1245px;top:414px;font-family:Liberation Mono,monospace;font-size:15px;transform:scaleX(0.833);transform-origin:0 0;">R31016</div>
<div class="t" style="left:1363px;top:414px;font-family:Liberation Mono,monospace;font-size:15px;transform:scaleX(0.833);transform-origin:0 0;">INT</div>
<div class="t" style="left:1462px;top:412px;font-size:15px">十进制</div>
<div class="t" style="left:1562px;top:413px;font-size:14px">33</div>
<div style="position:absolute;left:1136px;top:430px;width:64px;height:19px;background:#0080ff"></div>
<div style="position:absolute;left:1136px;top:429px;width:64px;height:1px;background:#e0f0ff"></div>
<div style="position:absolute;left:1135px;top:449px;width:638px;height:1px;background:#c0c0c0"></div>
<div class="t" style="left:1146px;top:435px;font-size:14px;color:#000">36</div>
<div class="t" style="left:1203.5px;top:436px;font-family:Liberation Mono,monospace;font-size:15px;transform:scaleX(0.833);transform-origin:0 0;">...</div>
<div style="position:absolute;left:1225px;top:429px;width:1px;height:21px;background:#c0c0c0"></div>
<div class="t" style="left:1245px;top:436px;font-family:Liberation Mono,monospace;font-size:15px;transform:scaleX(0.833);transform-origin:0 0;">R31017</div>
<div class="t" style="left:1363px;top:436px;font-family:Liberation Mono,monospace;font-size:15px;transform:scaleX(0.833);transform-origin:0 0;">INT</div>
<div class="t" style="left:1462px;top:434px;font-size:15px">十进制</div>
<div class="t" style="left:1562px;top:435px;font-size:14px">35</div>
<div style="position:absolute;left:1136px;top:451px;width:64px;height:19px;background:#0080ff"></div>
<div style="position:absolute;left:1136px;top:450px;width:64px;height:1px;background:#e0f0ff"></div>
<div style="position:absolute;left:1135px;top:470px;width:638px;height:1px;background:#c0c0c0"></div>
<div class="t" style="left:1146px;top:456px;font-size:14px;color:#000">37</div>
<div class="t" style="left:1203.5px;top:457px;font-family:Liberation Mono,monospace;font-size:15px;transform:scaleX(0.833);transform-origin:0 0;">...</div>
<div style="position:absolute;left:1225px;top:450px;width:1px;height:21px;background:#c0c0c0"></div>
<div class="t" style="left:1245px;top:457px;font-family:Liberation Mono,monospace;font-size:15px;transform:scaleX(0.833);transform-origin:0 0;">R31018</div>
<div class="t" style="left:1363px;top:457px;font-family:Liberation Mono,monospace;font-size:15px;transform:scaleX(0.833);transform-origin:0 0;">INT</div>
<div class="t" style="left:1462px;top:455px;font-size:15px">十进制</div>
<div class="t" style="left:1562px;top:456px;font-size:14px">37</div>
<div style="position:absolute;left:1136px;top:472px;width:64px;height:19px;background:#0080ff"></div>
<div style="position:absolute;left:1136px;top:471px;width:64px;height:1px;background:#e0f0ff"></div>
<div style="position:absolute;left:1135px;top:491px;width:638px;height:1px;background:#c0c0c0"></div>
<div class="t" style="left:1146px;top:477px;font-size:14px;color:#000">38</div>
<div class="t" style="left:1203.5px;top:478px;font-family:Liberation Mono,monospace;font-size:15px;transform:scaleX(0.833);transform-origin:0 0;">...</div>
<div style="position:absolute;left:1225px;top:471px;width:1px;height:21px;background:#c0c0c0"></div>
<div class="t" style="left:1245px;top:478px;font-family:Liberation Mono,monospace;font-size:15px;transform:scaleX(0.833);transform-origin:0 0;">R31019</div>
<div class="t" style="left:1363px;top:478px;font-family:Liberation Mono,monospace;font-size:15px;transform:scaleX(0.833);transform-origin:0 0;">INT</div>
<div class="t" style="left:1462px;top:476px;font-size:15px">十进制</div>
<div class="t" style="left:1562px;top:477px;font-size:14px">39</div>
<div style="position:absolute;left:1136px;top:493px;width:64px;height:20px;background:#0080ff"></div>
<div style="position:absolute;left:1136px;top:492px;width:64px;height:1px;background:#e0f0ff"></div>
<div style="position:absolute;left:1135px;top:513px;width:638px;height:1px;background:#c0c0c0"></div>
<div class="t" style="left:1146px;top:498px;font-size:14px;color:#000">39</div>
<div class="t" style="left:1203.5px;top:499px;font-family:Liberation Mono,monospace;font-size:15px;transform:scaleX(0.833);transform-origin:0 0;">...</div>
<div style="position:absolute;left:1225px;top:492px;width:1px;height:22px;background:#c0c0c0"></div>
<div class="t" style="left:1245px;top:499px;font-family:Liberation Mono,monospace;font-size:15px;transform:scaleX(0.833);transform-origin:0 0;">R31020</div>
<div class="t" style="left:1363px;top:499px;font-family:Liberation Mono,monospace;font-size:15px;transform:scaleX(0.833);transform-origin:0 0;">INT</div>
<div class="t" style="left:1462px;top:497px;font-size:15px">十进制</div>
<div class="t" style="left:1562px;top:498px;font-size:14px">41</div>
<div style="position:absolute;left:1136px;top:515px;width:64px;height:19px;background:#0080ff"></div>
<div style="position:absolute;left:1136px;top:514px;width:64px;height:1px;background:#e0f0ff"></div>
<div style="position:absolute;left:1135px;top:534px;width:638px;height:1px;background:#c0c0c0"></div>
<div class="t" style="left:1146px;top:520px;font-size:14px;color:#000">40</div>
<div class="t" style="left:1203.5px;top:521px;font-family:Liberation Mono,monospace;font-size:15px;transform:scaleX(0.833);transform-origin:0 0;">...</div>
<div style="position:absolute;left:1225px;top:514px;width:1px;height:21px;background:#c0c0c0"></div>
<div class="t" style="left:1245px;top:521px;font-family:Liberation Mono,monospace;font-size:15px;transform:scaleX(0.833);transform-origin:0 0;">R31021</div>
<div class="t" style="left:1363px;top:521px;font-family:Liberation Mono,monospace;font-size:15px;transform:scaleX(0.833);transform-origin:0 0;">INT</div>
<div class="t" style="left:1462px;top:519px;font-size:15px">十进制</div>
<div class="t" style="left:1562px;top:520px;font-size:14px">43</div>
<div style="position:absolute;left:1136px;top:536px;width:64px;height:19px;background:#0080ff"></div>
<div style="position:absolute;left:1136px;top:535px;width:64px;height:1px;background:#e0f0ff"></div>
<div style="position:absolute;left:1135px;top:555px;width:638px;height:1px;background:#c0c0c0"></div>
<div class="t" style="left:1146px;top:541px;font-size:14px;color:#000">41</div>
<div class="t" style="left:1203.5px;top:542px;font-family:Liberation Mono,monospace;font-size:15px;transform:scaleX(0.833);transform-origin:0 0;">...</div>
<div style="position:absolute;left:1225px;top:535px;width:1px;height:21px;background:#c0c0c0"></div>
<div class="t" style="left:1245px;top:542px;font-family:Liberation Mono,monospace;font-size:15px;transform:scaleX(0.833);transform-origin:0 0;">R31022</div>
<div class="t" style="left:1363px;top:542px;font-family:Liberation Mono,monospace;font-size:15px;transform:scaleX(0.833);transform-origin:0 0;">INT</div>
<div class="t" style="left:1462px;top:540px;font-size:15px">十进制</div>
<div class="t" style="left:1562px;top:541px;font-size:14px">45</div>
<div style="position:absolute;left:1136px;top:557px;width:64px;height:19px;background:#0080ff"></div>
<div style="position:absolute;left:1136px;top:556px;width:64px;height:1px;background:#e0f0ff"></div>
<div style="position:absolute;left:1135px;top:576px;width:638px;height:1px;background:#c0c0c0"></div>
<div class="t" style="left:1146px;top:562px;font-size:14px;color:#000">42</div>
<div class="t" style="left:1203.5px;top:563px;font-family:Liberation Mono,monospace;font-size:15px;transform:scaleX(0.833);transform-origin:0 0;">...</div>
<div style="position:absolute;left:1225px;top:556px;width:1px;height:21px;background:#c0c0c0"></div>
<div class="t" style="left:1245px;top:563px;font-family:Liberation Mono,monospace;font-size:15px;transform:scaleX(0.833);transform-origin:0 0;">R31023</div>
<div class="t" style="left:1363px;top:563px;font-family:Liberation Mono,monospace;font-size:15px;transform:scaleX(0.833);transform-origin:0 0;">INT</div>
<div class="t" style="left:1462px;top:561px;font-size:15px">十进制</div>
<div class="t" style="left:1562px;top:562px;font-size:14px">47</div>
<div style="position:absolute;left:1136px;top:578px;width:64px;height:20px;background:#0080ff"></div>
<div style="position:absolute;left:1136px;top:577px;width:64px;height:1px;background:#e0f0ff"></div>
<div style="position:absolute;left:1135px;top:598px;width:638px;height:1px;background:#c0c0c0"></div>
<div class="t" style="left:1146px;top:583px;font-size:14px;color:#000">43</div>
<div class="t" style="left:1203.5px;top:584px;font-family:Liberation Mono,monospace;font-size:15px;transform:scaleX(0.833);transform-origin:0 0;">...</div>
<div style="position:absolute;left:1225px;top:577px;width:1px;height:22px;background:#c0c0c0"></div>
<div class="t" style="left:1245px;top:584px;font-family:Liberation Mono,monospace;font-size:15px;transform:scaleX(0.833);transform-origin:0 0;">R31024</div>
<div class="t" style="left:1363px;top:584px;font-family:Liberation Mono,monospace;font-size:15px;transform:scaleX(0.833);transform-origin:0 0;">INT</div>
<div class="t" style="left:1462px;top:582px;font-size:15px">十进制</div>
<div class="t" style="left:1562px;top:583px;font-size:14px">49</div>
<div style="position:absolute;left:1136px;top:600px;width:64px;height:19px;background:#0080ff"></div>
<div style="position:absolute;left:1136px;top:599px;width:64px;height:1px;background:#e0f0ff"></div>
<div style="position:absolute;left:1135px;top:619px;width:638px;height:1px;background:#c0c0c0"></div>
<div class="t" style="left:1146px;top:605px;font-size:14px;color:#000">44</div>
<div class="t" style="left:1203.5px;top:606px;font-family:Liberation Mono,monospace;font-size:15px;transform:scaleX(0.833);transform-origin:0 0;">...</div>
<div style="position:absolute;left:1225px;top:599px;width:1px;height:21px;background:#c0c0c0"></div>
<div class="t" style="left:1245px;top:606px;font-family:Liberation Mono,monospace;font-size:15px;transform:scaleX(0.833);transform-origin:0 0;">R31025</div>
<div class="t" style="left:1363px;top:606px;font-family:Liberation Mono,monospace;font-size:15px;transform:scaleX(0.833);transform-origin:0 0;">INT</div>
<div class="t" style="left:1462px;top:604px;font-size:15px">十进制</div>
<div class="t" style="left:1562px;top:605px;font-size:14px">51</div>
<div style="position:absolute;left:1136px;top:621px;width:64px;height:19px;background:#0080ff"></div>
<div style="position:absolute;left:1136px;top:620px;width:64px;height:1px;background:#e0f0ff"></div>
<div style="position:absolute;left:1135px;top:640px;width:638px;height:1px;background:#c0c0c0"></div>
<div class="t" style="left:1146px;top:626px;font-size:14px;color:#000">45</div>
<div class="t" style="left:1203.5px;top:627px;font-family:Liberation Mono,monospace;font-size:15px;transform:scaleX(0.833);transform-origin:0 0;">...</div>
<div style="position:absolute;left:1225px;top:620px;width:1px;height:21px;background:#c0c0c0"></div>
<div class="t" style="left:1245px;top:627px;font-family:Liberation Mono,monospace;font-size:15px;transform:scaleX(0.833);transform-origin:0 0;">R31026</div>
<div class="t" style="left:1363px;top:627px;font-family:Liberation Mono,monospace;font-size:15px;transform:scaleX(0.833);transform-origin:0 0;">INT</div>
<div class="t" style="left:1462px;top:625px;font-size:15px">十进制</div>
<div class="t" style="left:1562px;top:626px;font-size:14px">53</div>
<div style="position:absolute;left:1136px;top:642px;width:64px;height:20px;background:#0080ff"></div>
<div style="position:absolute;left:1136px;top:641px;width:64px;height:1px;background:#e0f0ff"></div>
<div style="position:absolute;left:1135px;top:662px;width:638px;height:1px;background:#c0c0c0"></div>
<div class="t" style="left:1146px;top:647px;font-size:14px;color:#000">46</div>
<div class="t" style="left:1203.5px;top:648px;font-family:Liberation Mono,monospace;font-size:15px;transform:scaleX(0.833);transform-origin:0 0;">...</div>
<div style="position:absolute;left:1225px;top:641px;width:1px;height:22px;background:#c0c0c0"></div>
<div class="t" style="left:1245px;top:648px;font-family:Liberation Mono,monospace;font-size:15px;transform:scaleX(0.833);transform-origin:0 0;">R31027</div>
<div class="t" style="left:1363px;top:648px;font-family:Liberation Mono,monospace;font-size:15px;transform:scaleX(0.833);transform-origin:0 0;">INT</div>
<div class="t" style="left:1462px;top:646px;font-size:15px">十进制</div>
<div class="t" style="left:1562px;top:647px;font-size:14px">55</div>
<div style="position:absolute;left:1136px;top:664px;width:64px;height:19px;background:#0080ff"></div>
<div style="position:absolute;left:1136px;top:663px;width:64px;height:1px;background:#e0f0ff"></div>
<div style="position:absolute;left:1135px;top:683px;width:638px;height:1px;background:#c0c0c0"></div>
<div class="t" style="left:1146px;top:669px;font-size:14px;color:#000">47</div>
<div class="t" style="left:1203.5px;top:670px;font-family:Liberation Mono,monospace;font-size:15px;transform:scaleX(0.833);transform-origin:0 0;">...</div>
<div style="position:absolute;left:1225px;top:663px;width:1px;height:21px;background:#c0c0c0"></div>
<div class="t" style="left:1245px;top:670px;font-family:Liberation Mono,monospace;font-size:15px;transform:scaleX(0.833);transform-origin:0 0;">R31028</div>
<div class="t" style="left:1363px;top:670px;font-family:Liberation Mono,monospace;font-size:15px;transform:scaleX(0.833);transform-origin:0 0;">INT</div>
<div class="t" style="left:1462px;top:668px;font-size:15px">十进制</div>
<div class="t" style="left:1562px;top:669px;font-size:14px">57</div>
<div style="position:absolute;left:1136px;top:685px;width:64px;height:19px;background:#0080ff"></div>
<div style="position:absolute;left:1136px;top:684px;width:64px;height:1px;background:#e0f0ff"></div>
<div style="position:absolute;left:1135px;top:704px;width:638px;height:1px;background:#c0c0c0"></div>
<div class="t" style="left:1146px;top:690px;font-size:14px;color:#000">48</div>
<div class="t" style="left:1203.5px;top:691px;font-family:Liberation Mono,monospace;font-size:15px;transform:scaleX(0.833);transform-origin:0 0;">...</div>
<div style="position:absolute;left:1225px;top:684px;width:1px;height:21px;background:#c0c0c0"></div>
<div class="t" style="left:1245px;top:691px;font-family:Liberation Mono,monospace;font-size:15px;transform:scaleX(0.833);transform-origin:0 0;">R31029</div>
<div class="t" style="left:1363px;top:691px;font-family:Liberation Mono,monospace;font-size:15px;transform:scaleX(0.833);transform-origin:0 0;">INT</div>
<div class="t" style="left:1462px;top:689px;font-size:15px">十进制</div>
<div class="t" style="left:1562px;top:690px;font-size:14px">59</div>
<div style="position:absolute;left:1136px;top:706px;width:64px;height:19px;background:#0080ff"></div>
<div style="position:absolute;left:1136px;top:705px;width:64px;height:1px;background:#e0f0ff"></div>
<div style="position:absolute;left:1135px;top:725px;width:638px;height:1px;background:#c0c0c0"></div>
<div class="t" style="left:1146px;top:711px;font-size:14px;color:#000">49</div>
<div class="t" style="left:1203.5px;top:712px;font-family:Liberation Mono,monospace;font-size:15px;transform:scaleX(0.833);transform-origin:0 0;">...</div>
<div style="position:absolute;left:1225px;top:705px;width:1px;height:21px;background:#c0c0c0"></div>
<div class="t" style="left:1245px;top:712px;font-family:Liberation Mono,monospace;font-size:15px;transform:scaleX(0.833);transform-origin:0 0;">R31030</div>
<div class="t" style="left:1363px;top:712px;font-family:Liberation Mono,monospace;font-size:15px;transform:scaleX(0.833);transform-origin:0 0;">INT</div>
<div class="t" style="left:1462px;top:710px;font-size:15px">十进制</div>
<div class="t" style="left:1562px;top:711px;font-size:14px">61</div>
<div style="position:absolute;left:1136px;top:727px;width:64px;height:20px;background:#0080ff"></div>
<div style="position:absolute;left:1136px;top:726px;width:64px;height:1px;background:#e0f0ff"></div>
<div style="position:absolute;left:1135px;top:747px;width:638px;height:1px;background:#c0c0c0"></div>
<div class="t" style="left:1146px;top:732px;font-size:14px;color:#000">50</div>
<div class="t" style="left:1203.5px;top:733px;font-family:Liberation Mono,monospace;font-size:15px;transform:scaleX(0.833);transform-origin:0 0;">...</div>
<div style="position:absolute;left:1225px;top:726px;width:1px;height:22px;background:#c0c0c0"></div>
<div class="t" style="left:1245px;top:733px;font-family:Liberation Mono,monospace;font-size:15px;transform:scaleX(0.833);transform-origin:0 0;">R31031</div>
<div class="t" style="left:1363px;top:733px;font-family:Liberation Mono,monospace;font-size:15px;transform:scaleX(0.833);transform-origin:0 0;">INT</div>
<div class="t" style="left:1462px;top:731px;font-size:15px">十进制</div>
<div class="t" style="left:1562px;top:732px;font-size:14px">63</div>
<div style="position:absolute;left:1136px;top:749px;width:64px;height:19px;background:#0080ff"></div>
<div style="position:absolute;left:1136px;top:748px;width:64px;height:1px;background:#e0f0ff"></div>
<div style="position:absolute;left:1135px;top:768px;width:638px;height:1px;background:#c0c0c0"></div>
<div class="t" style="left:1146px;top:754px;font-size:14px;color:#000">51</div>
<div class="t" style="left:1203.5px;top:755px;font-family:Liberation Mono,monospace;font-size:15px;transform:scaleX(0.833);transform-origin:0 0;">...</div>
<div style="position:absolute;left:1225px;top:748px;width:1px;height:21px;background:#c0c0c0"></div>
<div class="t" style="left:1245px;top:755px;font-family:Liberation Mono,monospace;font-size:15px;transform:scaleX(0.833);transform-origin:0 0;">R31032</div>
<div class="t" style="left:1363px;top:755px;font-family:Liberation Mono,monospace;font-size:15px;transform:scaleX(0.833);transform-origin:0 0;">INT</div>
<div class="t" style="left:1462px;top:753px;font-size:15px">十进制</div>
<div class="t" style="left:1562px;top:754px;font-size:14px">65</div>
<div style="position:absolute;left:1136px;top:770px;width:64px;height:19px;background:#0080ff"></div>
<div style="position:absolute;left:1136px;top:769px;width:64px;height:1px;background:#e0f0ff"></div>
<div style="position:absolute;left:1135px;top:789px;width:638px;height:1px;background:#c0c0c0"></div>
<div class="t" style="left:1146px;top:775px;font-size:14px;color:#000">52</div>
<div class="t" style="left:1203.5px;top:776px;font-family:Liberation Mono,monospace;font-size:15px;transform:scaleX(0.833);transform-origin:0 0;">...</div>
<div style="position:absolute;left:1225px;top:769px;width:1px;height:21px;background:#c0c0c0"></div>
<div class="t" style="left:1245px;top:776px;font-family:Liberation Mono,monospace;font-size:15px;transform:scaleX(0.833);transform-origin:0 0;">R31033</div>
<div class="t" style="left:1363px;top:776px;font-family:Liberation Mono,monospace;font-size:15px;transform:scaleX(0.833);transform-origin:0 0;">INT</div>
<div class="t" style="left:1462px;top:774px;font-size:15px">十进制</div>
<div class="t" style="left:1562px;top:775px;font-size:14px">67</div>
<div style="position:absolute;left:1136px;top:791px;width:64px;height:19px;background:#0080ff"></div>
<div style="position:absolute;left:1136px;top:790px;width:64px;height:1px;background:#e0f0ff"></div>
<div style="position:absolute;left:1135px;top:810px;width:638px;height:1px;background:#c0c0c0"></div>
<div class="t" style="left:1146px;top:796px;font-size:14px;color:#000">53</div>
<div class="t" style="left:1203.5px;top:797px;font-family:Liberation Mono,monospace;font-size:15px;transform:scaleX(0.833);transform-origin:0 0;">...</div>
<div style="position:absolute;left:1225px;top:790px;width:1px;height:21px;background:#c0c0c0"></div>
<div class="t" style="left:1245px;top:797px;font-family:Liberation Mono,monospace;font-size:15px;transform:scaleX(0.833);transform-origin:0 0;">R31034</div>
<div class="t" style="left:1363px;top:797px;font-family:Liberation Mono,monospace;font-size:15px;transform:scaleX(0.833);transform-origin:0 0;">INT</div>
<div class="t" style="left:1462px;top:795px;font-size:15px">十进制</div>
<div class="t" style="left:1562px;top:796px;font-size:14px">69</div>
<div style="position:absolute;left:1136px;top:812px;width:64px;height:20px;background:#0080ff"></div>
<div style="position:absolute;left:1136px;top:811px;width:64px;height:1px;background:#e0f0ff"></div>
<div style="position:absolute;left:1135px;top:832px;width:638px;height:1px;background:#c0c0c0"></div>
<div class="t" style="left:1146px;top:817px;font-size:14px;color:#000">54</div>
<div class="t" style="left:1203.5px;top:818px;font-family:Liberation Mono,monospace;font-size:15px;transform:scaleX(0.833);transform-origin:0 0;">...</div>
<div style="position:absolute;left:1225px;top:811px;width:1px;height:22px;background:#c0c0c0"></div>
<div class="t" style="left:1245px;top:818px;font-family:Liberation Mono,monospace;font-size:15px;transform:scaleX(0.833);transform-origin:0 0;">R31035</div>
<div class="t" style="left:1363px;top:818px;font-family:Liberation Mono,monospace;font-size:15px;transform:scaleX(0.833);transform-origin:0 0;">INT</div>
<div class="t" style="left:1462px;top:816px;font-size:15px">十进制</div>
<div class="t" style="left:1562px;top:817px;font-size:14px">71</div>
<div style="position:absolute;left:1136px;top:834px;width:64px;height:19px;background:#0080ff"></div>
<div style="position:absolute;left:1136px;top:833px;width:64px;height:1px;background:#e0f0ff"></div>
<div style="position:absolute;left:1135px;top:853px;width:638px;height:1px;background:#c0c0c0"></div>
<div class="t" style="left:1146px;top:839px;font-size:14px;color:#000">55</div>
<div class="t" style="left:1203.5px;top:840px;font-family:Liberation Mono,monospace;font-size:15px;transform:scaleX(0.833);transform-origin:0 0;">...</div>
<div style="position:absolute;left:1225px;top:833px;width:1px;height:21px;background:#c0c0c0"></div>
<div class="t" style="left:1245px;top:840px;font-family:Liberation Mono,monospace;font-size:15px;transform:scaleX(0.833);transform-origin:0 0;">R31036</div>
<div class="t" style="left:1363px;top:840px;font-family:Liberation Mono,monospace;font-size:15px;transform:scaleX(0.833);transform-origin:0 0;">INT</div>
<div class="t" style="left:1462px;top:838px;font-size:15px">十进制</div>
<div class="t" style="left:1562px;top:839px;font-size:14px">73</div>
<div style="position:absolute;left:1136px;top:855px;width:64px;height:19px;background:#0080ff"></div>
<div style="position:absolute;left:1136px;top:854px;width:64px;height:1px;background:#e0f0ff"></div>
<div style="position:absolute;left:1135px;top:874px;width:638px;height:1px;background:#c0c0c0"></div>
<div class="t" style="left:1146px;top:860px;font-size:14px;color:#000">56</div>
<div style="position:absolute;left:1225px;top:854px;width:1px;height:21px;background:#c0c0c0"></div>
<div class="t" style="left:1245px;top:861px;font-family:Liberation Mono,monospace;font-size:15px;transform:scaleX(0.833);transform-origin:0 0;">R31037</div>
<div class="t" style="left:1363px;top:861px;font-family:Liberation Mono,monospace;font-size:15px;transform:scaleX(0.833);transform-origin:0 0;">INT</div>
<div class="t" style="left:1462px;top:859px;font-size:15px">十进制</div>
<div class="t" style="left:1562px;top:860px;font-size:14px">75</div>
<div style="position:absolute;left:1773px;top:46px;width:22px;height:825px;background:#f0f0f0"></div>
<svg style="left:1779px;top:54px" width="10" height="7" viewBox="0 0 10 7"><path d="M1 6L5 2L9 6" fill="none" stroke="#606060" stroke-width="2"/></svg>
<svg style="left:1779px;top:857px" width="10" height="7" viewBox="0 0 10 7"><path d="M1 1L5 5L9 1" fill="none" stroke="#606060" stroke-width="2"/></svg>
<div style="position:absolute;left:1775px;top:111px;width:18px;height:92px;background:#cdcdcd"></div>
<div style="position:absolute;left:1135px;top:871px;width:660px;height:20px;background:#f0f0f0"></div>
<svg style="left:1141px;top:876px" width="7" height="10" viewBox="0 0 7 10"><path d="M6 1L2 5L6 9" fill="none" stroke="#606060" stroke-width="2"/></svg>
<svg style="left:1760px;top:876px" width="7" height="10" viewBox="0 0 7 10"><path d="M1 1L5 5L1 9" fill="none" stroke="#606060" stroke-width="2"/></svg>
<div style="position:absolute;left:1156px;top:872px;width:469px;height:18px;background:#cdcdcd"></div>
<div style="position:absolute;left:1131px;top:893px;width:668px;height:22px;background:#f0f0f0"></div>
<div style="position:absolute;left:1134px;top:894px;width:663px;height:1.5px;background:#000"></div>
<svg style="left:1132px;top:896px" width="16" height="18" viewBox="0 0 16 18"><rect x="0" y="0" width="16" height="18" fill="#f0f0f0"/><path d="M0 17.5H15.5V0" fill="none" stroke="#a0a0a0" stroke-width="1.2"/><path d="M4 4V14" stroke="#000" stroke-width="1.8"/><path d="M12 4V14L5.5 9Z" fill="#000"/></svg>
<svg style="left:1152px;top:896px" width="16" height="18" viewBox="0 0 16 18"><rect x="0" y="0" width="16" height="18" fill="#f0f0f0"/><path d="M0 17.5H15.5V0" fill="none" stroke="#a0a0a0" stroke-width="1.2"/><path d="M10 4V14L4.5 9Z" fill="#000"/></svg>
<svg style="left:1172px;top:896px" width="16" height="18" viewBox="0 0 16 18"><rect x="0" y="0" width="16" height="18" fill="#f0f0f0"/><path d="M0 17.5H15.5V0" fill="none" stroke="#a0a0a0" stroke-width="1.2"/><path d="M6 4V14L11.5 9Z" fill="#000"/></svg>
<svg style="left:1192px;top:896px" width="16" height="18" viewBox="0 0 16 18"><rect x="0" y="0" width="16" height="18" fill="#f0f0f0"/><path d="M0 17.5H15.5V0" fill="none" stroke="#a0a0a0" stroke-width="1.2"/><path d="M12 4V14" stroke="#000" stroke-width="1.8"/><path d="M4 4V14L10.5 9Z" fill="#000"/></svg>
<svg style="left:1208px;top:894px" width="290" height="22" viewBox="0 0 290 22"><path d="M4 20H19.5L28.5 1M24 10.5L29 20H74L83 1M78.5 10.5L83.5 20H137L146 1M141.5 10.5L146.5 20H211L215.5 10.5" fill="none" stroke="#000" stroke-width="1.2"/><path d="M215.5 1L225 20H260L269 1Z" fill="#fff" stroke="#000" stroke-width="1.2"/><rect x="271" y="3" width="5" height="17" fill="#fff" stroke="#a0a0a0" stroke-width="1"/></svg>
<div class="t" style="left:1250px;top:896px;font-size:14px;color:#222">通讯</div>
<div class="t" style="left:1305px;top:896px;font-size:14px;color:#222">转换</div>
<div class="t" style="left:1362px;top:896px;font-size:14px;color:#222">查找结果</div>
<div class="t" style="left:1435px;top:896px;font-size:14px;font-weight:bold">监控</div>
<svg style="left:1491px;top:898px" width="7" height="10" viewBox="0 0 7 10"><path d="M6 1L2 5L6 9" fill="none" stroke="#606060" stroke-width="2"/></svg>
<svg style="left:1761px;top:898px" width="7" height="10" viewBox="0 0 7 10"><path d="M1 1L5 5L1 9" fill="none" stroke="#606060" stroke-width="2"/></svg>
<div style="position:absolute;left:1506px;top:897px;width:21px;height:14px;background:#cdcdcd"></div>
<div style="position:absolute;left:1131px;top:915px;width:668px;height:3px;background:#f0f0f0"></div>
<div style="position:absolute;left:1124px;top:918px;width:677px;height:1px;background:#a0a0a0"></div>
<div class="t" style="left:597px;top:926px;font-size:15px;color:#222">PLC当前状态</div>
<div class="t" style="left:737px;top:926px;font-size:15px;color:#222">故障状态</div>
<div style="position:absolute;left:696.0px;top:926px;width:15px;height:15px;border-radius:50%;background:radial-gradient(circle at 40% 35%,#c8f0b8,#58b848 70%);border:1px solid #305030"></div>
<div style="position:absolute;left:810.0px;top:926px;width:15px;height:15px;border-radius:50%;background:radial-gradient(circle at 40% 35%,#c8f0b8,#58b848 70%);border:1px solid #305030"></div>
<div style="position:absolute;left:841px;top:922px;width:541px;height:25px;background:#0000ff"></div>
<div class="t" style="left:843px;top:926px;font-size:15px;letter-spacing:0.22px;color:#fff">[Easy320] 版本:6.2.0.11 扫描周期:10.0 ms 防火墙状态:已关闭</div>
<div style="position:absolute;left:1386px;top:922px;width:178px;height:25px;background:#0000ff"></div>
<div class="t" style="left:1389px;top:926px;font-size:15px;color:#fff">CPU:18%&nbsp;&nbsp;&nbsp;内存:26%</div>
<div style="position:absolute;left:1568px;top:922px;width:37px;height:25px;border-left:1px solid #a0a0a0;border-top:1px solid #a0a0a0"></div>
<div class="t" style="left:1571px;top:926px;font-size:15px;color:#222">改写</div>
<div style="position:absolute;left:1609px;top:922px;width:192px;height:25px;border-left:1px solid #a0a0a0;border-top:1px solid #a0a0a0"></div>
<div class="t" style="left:1611px;top:926px;font-size:15px;color:#222">行: 1613, 列:&nbsp;&nbsp;&nbsp;&nbsp;&nbsp;8</div>
</body></html>
